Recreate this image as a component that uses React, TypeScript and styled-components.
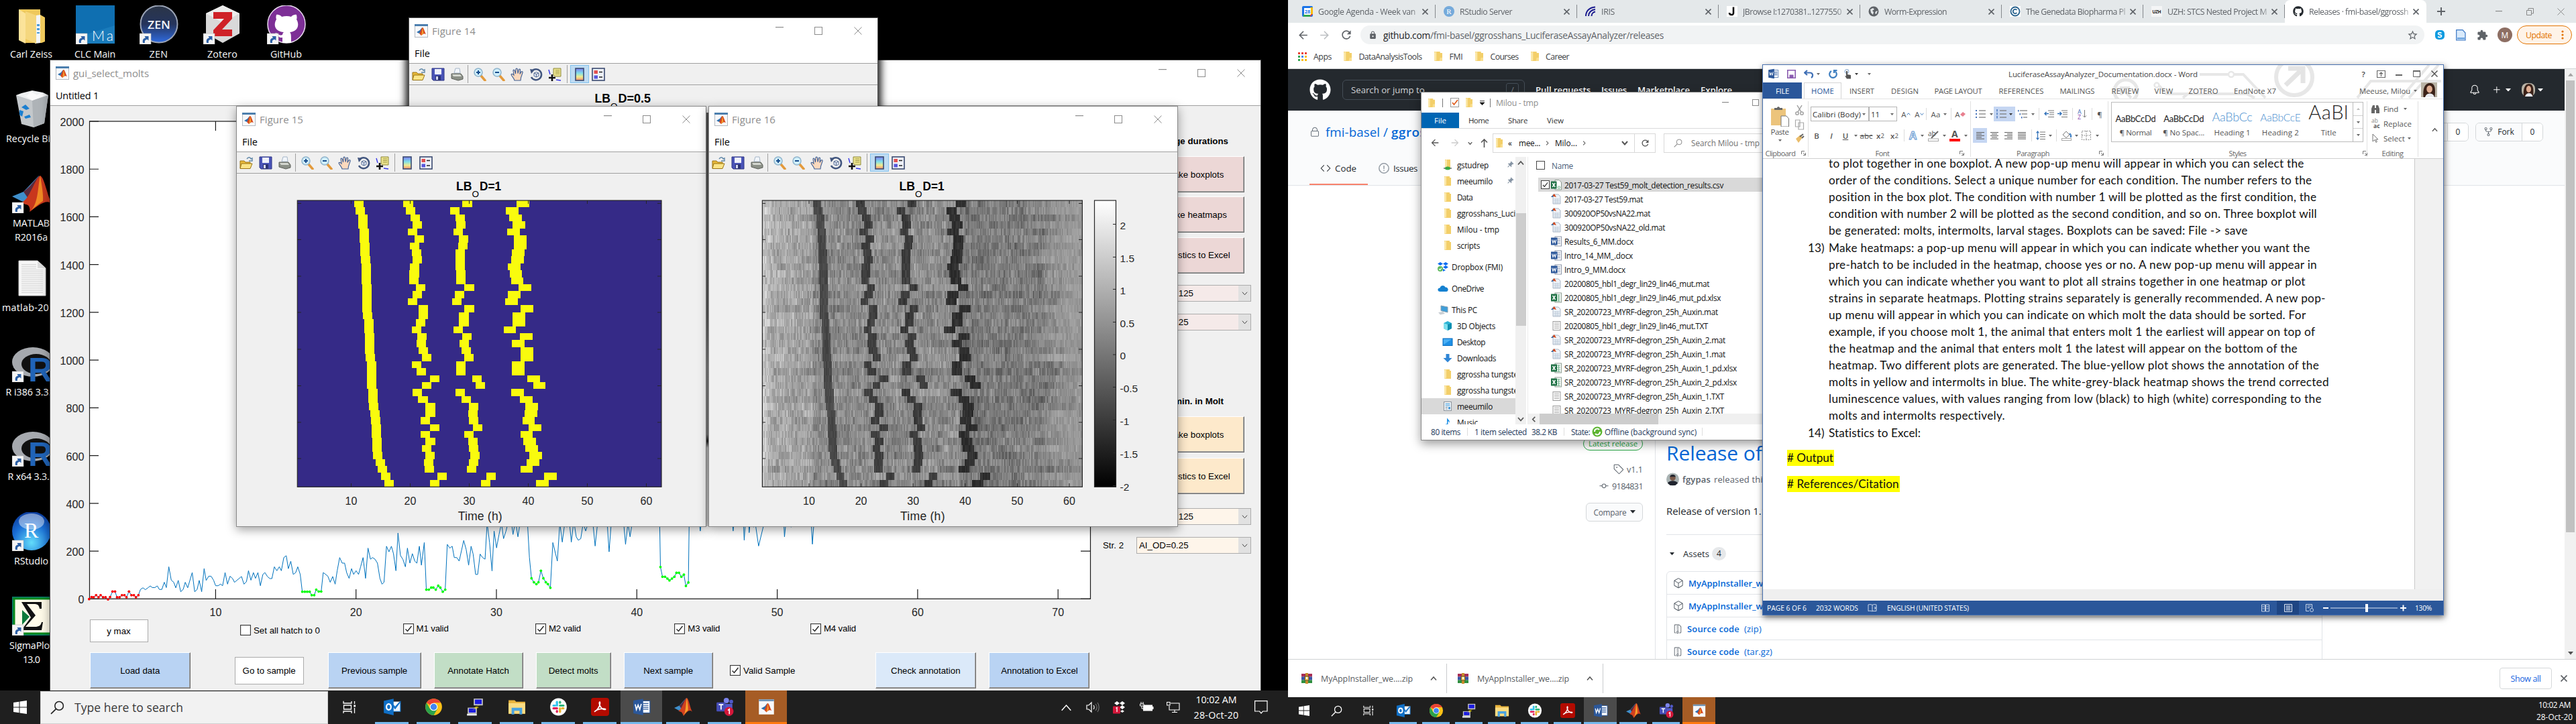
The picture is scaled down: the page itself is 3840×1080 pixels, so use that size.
import React, { useLayoutEffect, useRef } from "react";
import styled, { createGlobalStyle, css } from "styled-components";
import { FaGithub } from "react-icons/fa";
import {
  GoLock, GoCode, GoTag, GoGitCommit, GoPackage, GoFileZip, GoRepoForked, GoBell, GoPlus,
} from "react-icons/go";
import { MdExtension, MdStarBorder, MdArrowBack, MdArrowForward, MdRefresh, MdLock, MdPushPin } from "react-icons/md";

const UI = `"Open Sans", "Noto Sans", sans-serif`;
const ARIAL = `"Liberation Sans", Arial, sans-serif`;
const CALIBRI = `Lato, "Open Sans", sans-serif`;

const Global = createGlobalStyle`
  * { box-sizing: border-box; }
  body { margin: 0; background: #000; font-family: ${UI}; overflow: hidden; }
  svg { display: block; flex-shrink: 0; }
  b { font-weight: 600; }
`;

/* ---------- text helpers ---------- */

const FitSpan = styled.span`
  display: inline-block;
  white-space: pre;
  flex-shrink: 0;
`;

/* Text tracked so that it fills the given width. */
function Fit({ w, children }: { w: number; children: string }) {
  const ref = useRef<HTMLSpanElement>(null);
  useLayoutEffect(() => {
    const el = ref.current;
    if (!el) return;
    el.style.letterSpacing = "0px";
    const natural = el.getBoundingClientRect().width;
    el.style.letterSpacing = `${(w - natural) / children.length}px`;
  }, [w, children]);
  return <FitSpan ref={ref}>{children}</FitSpan>;
}

const Cell = styled.div<{ $w: number; $j?: string }>`
  width: ${(p) => p.$w}px;
  height: 100%;
  flex-shrink: 0;
  display: flex;
  align-items: center;
  justify-content: ${(p) => p.$j || "center"};
  white-space: nowrap;
`;

const Gap = styled.div<{ $w?: number; $h?: number }>`
  width: ${(p) => p.$w || 0}px;
  height: ${(p) => p.$h || 0}px;
  flex-shrink: 0;
`;

/* ---------- shell ---------- */

const Screens = styled.div`
  display: flex;
  width: 3840px;
  height: 1080px;
`;
const Monitor = styled.div`
  width: 1920px;
  height: 1080px;
  display: flex;
  flex-direction: column;
  overflow: hidden;
  background: #000;
`;
const Workspace = styled.div`
  position: relative;
  flex: 1;
  overflow: hidden;
`;
const Win = styled.div<{ $x: number; $y: number; $w: number; $h: number; $shadow?: string; $border?: string }>`
  position: absolute;
  left: ${(p) => p.$x}px;
  top: ${(p) => p.$y}px;
  width: ${(p) => p.$w}px;
  height: ${(p) => p.$h}px;
  display: flex;
  flex-direction: column;
  background: #fff;
  border: 1px solid ${(p) => p.$border || "#8a8a8a"};
  box-shadow: ${(p) => p.$shadow || "0 4px 14px rgba(0,0,0,.38)"};
  overflow: hidden;
`;

/* ---------- shared drawings ---------- */

const FigIcon = ({ s = 20 }: { s?: number }) => (
  <svg width={s} height={s} viewBox="0 0 20 20">
    <rect x="0.5" y="0.5" width="19" height="19" fill="#f7f8fa" stroke="#b4b9c0" />
    <rect x="0" y="0" width="20" height="3" fill="#4c7fae" />
    <path d="M3 12 L8 9 L11 5 L9 12 L7 14 Z" fill="#2f6fae" />
    <path d="M7 14 C9 12 10 5 12 5 C14 6 15 12 17 15 C14 13 12 15 10 17 Z" fill="#d6451d" />
    <path d="M12 5 L13.4 13.5 L10 17 Z" fill="#f2a02c" />
  </svg>
);

const Folder = ({ w = 11, h = 14 }: { w?: number; h?: number }) => (
  <svg width={w} height={h} viewBox="0 0 11 14" preserveAspectRatio="none">
    <path d="M0 0 H8 V2 H11 V14 H0 Z" fill="#f3cf6a" />
    <path d="M0 1 L3 0 V13 L0 14 Z" fill="#fbe7a8" />
    <path d="M8 9 H11 V14 H7 Z" fill="#fadf8f" />
  </svg>
);

const Chevron = ({ s = 10, dir = "down", c = "#555", sw = 1.5 }: { s?: number; dir?: string; c?: string; sw?: number }) => {
  const d: Record<string, string> = {
    down: "M1 3 L5 7.5 L9 3", up: "M1 7.5 L5 3 L9 7.5", right: "M3 1 L7 5 L3 9", left: "M7 1 L3 5 L7 9",
  };
  return (
    <svg width={s} height={s} viewBox="0 0 10 10">
      <path d={d[dir]} fill="none" stroke={c} strokeWidth={sw} />
    </svg>
  );
};
const Caret = ({ c = "#666", s = 5, up }: { c?: string; s?: number; up?: boolean }) => (
  <svg width={s} height={s * 0.6} viewBox="0 0 10 6"><path d={up ? "M0 6 H10 L5 0 Z" : "M0 0 H10 L5 6 Z"} fill={c} /></svg>
);
const Cross = ({ s = 12, c = "#8c8c8c", sw = 1 }: { s?: number; c?: string; sw?: number }) => (
  <svg width={s} height={s} viewBox={`0 0 ${s} ${s}`}>
    <path d={`M0.5 0.5 L${s - 0.5} ${s - 0.5} M${s - 0.5} 0.5 L0.5 ${s - 0.5}`} stroke={c} strokeWidth={sw} />
  </svg>
);
const MinGlyph = ({ w = 12, c = "#8c8c8c" }: { w?: number; c?: string }) => (
  <svg width={w} height="2"><rect width={w} height="1.2" fill={c} /></svg>
);
const MaxGlyph = ({ s = 12, c = "#8c8c8c" }: { s?: number; c?: string }) => (
  <svg width={s} height={s}><rect x=".5" y=".5" width={s - 1} height={s - 1} fill="none" stroke={c} /></svg>
);
const Magnifier = ({ s = 20, c = "#222" }: { s?: number; c?: string }) => (
  <svg width={s} height={s} viewBox="0 0 20 20">
    <circle cx="12.5" cy="7.5" r="6" fill="none" stroke={c} strokeWidth="1.5" />
    <path d="M8 12 L1 19" stroke={c} strokeWidth="1.6" />
  </svg>
);

/* ---------- desktop icons ---------- */

const ShortcutArrow = () => (
  <g transform="translate(0 42)">
    <rect width="17" height="16" fill="#f5f5f5" stroke="#bbb" strokeWidth=".6" />
    <path d="M5 14 C4 9 6 7 9 6.5 L7.5 4 H13.5 V10.5 L11.5 8.7 C8 9.5 7.5 11 8 14 Z" fill="#2c5fa5" />
  </g>
);

const RLogo = () => (
  <>
    <ellipse cx="31" cy="24" rx="31" ry="22" fill="#a6a9ae" />
    <ellipse cx="36" cy="27" rx="22" ry="15" fill="#111" />
    <text x="24" y="53" fontFamily={ARIAL} fontWeight="bold" fontSize="50" fill="#2064b8">R</text>
  </>
);

const deskArt: Record<string, React.ReactNode> = {
  zeiss: (
    <g>
      <path d="M10 6 H42 V14 L49 18 V54 L44 56 H20 Z" fill="#efc95c" />
      <path d="M36 15 L42 14 V56 L34 57 Z" fill="#f4f6f8" />
      <path d="M37 28 h4 v3 h-4z M37 34 h4 v3 h-4z M37 40 h4 v2 h-4z" fill="#4b9bd4" />
      <path d="M10 6 L20 12 V57 L10 52 Z" fill="#fbe39a" />
      <path d="M20 9 L36 15 V57 L20 50 Z" fill="#f5d77e" />
    </g>
  ),
  clc: (
    <g>
      <rect width="58" height="57" fill="#1a7cbc" />
      <path d="M0 0 H58 V30 L0 48 Z" fill="#0f6fb1" />
      <text x="24" y="53" fontFamily={CALIBRI} fontWeight="300" fontSize="21" fill="#fff" textLength="32">Ma</text>
      <ShortcutArrow />
    </g>
  ),
  zen: (
    <g>
      <defs><linearGradient id="zen" x1="0" x2="0" y1="0" y2="1"><stop offset="0" stopColor="#2b3547" /><stop offset=".5" stopColor="#25345c" /><stop offset="1" stopColor="#2f6be0" /></linearGradient></defs>
      <circle cx="29" cy="28" r="27.5" fill="url(#zen)" stroke="#9aa3b5" strokeWidth="2" />
      <text x="12" y="35" fontFamily={UI} fontWeight="600" fontSize="17" fill="#f2f5fa" textLength="34" lengthAdjust="spacingAndGlyphs">ZEN</text>
      <ShortcutArrow />
    </g>
  ),
  zotero: (
    <g>
      <path d="M29 0 L54 12 V42 L29 56 L4 42 V12 Z" fill="#d9d9d9" />
      <path d="M29 0 L54 12 L29 26 L4 12 Z" fill="#ececec" />
      <path d="M15 10 H43 V20 L28 36 H43 V46 H15 V37 L31 20 H15 Z" fill="#cf2127" />
      <ShortcutArrow />
    </g>
  ),
  github: (
    <g>
      <circle cx="29" cy="28" r="28" fill="#7d2f96" />
      <circle cx="29" cy="28" r="28" fill="none" stroke="#e9dcef" strokeWidth="1.5" />
      <path d="M14 14 C18 13 21 16 22 17 C27 15.500 32 15.500 36 17 C37 16 40 13 44 14 C45 18 44.500 20 44 21 C49 29 46 39 34 40 C36 42 36 44 36 56 H23 V48 C17 49 16 44 12 41 C15 40 18 46 23 44 C23 42 24 41 25 40 C12 39 9 29 14 21 C13 18 13.500 16 14 14 Z" fill="#fff" />
      <ShortcutArrow />
    </g>
  ),
  bin: (
    <g>
      <path d="M6 8 L54 8 L48 50 L32 56 L14 51 Z" fill="#c4c8cb" />
      <path d="M6 8 L30 16 L54 8 L46 4 L30 1 L14 5 Z" fill="#eef0f1" />
      <path d="M30 16 L54 8 L48 50 L32 56 Z" fill="#aeb3b7" />
      <path d="M14 5 l8 4 l6 -7 l9 6 l6 -4 l5 5 l-18 7 z" fill="#fafafa" />
      <path d="M14 26 l6 -4 l6 6 l-5 2 z M11 30 l6 2 l-2 8 l-4 -3z M18 40 l8 -3 l2 4 l-8 2z" fill="#1b7fd0" />
    </g>
  ),
  matlab: (
    <g>
      <g transform="translate(0 2)">
        <path d="M0 31 L17 24 C24 17 31 9 40 0 L33 25 L20 40 L14 38 Z" fill="#3f8fcb" />
        <path d="M17 24 C26 18 32 8 41 0 L32 26 L24 34 Z" fill="#5b2a3c" />
        <path d="M14 40 C26 36 34 4 42 0 C49 4 52 30 60 43 C52 34 42 42 26 54 C28 48 24 42 20 43 Z" fill="#c8371d" />
        <path d="M42 0 C44 14 47 28 46 38 C40 42 32 48 27 54 C40 40 38 16 42 0 Z" fill="#f08a24" />
      </g>
      <ShortcutArrow />
    </g>
  ),
  doc: (
    <g>
      <path d="M10 3 H38 L50 14 V55 H10 Z" fill="#f7f7f7" stroke="#cfcfcf" />
      <path d="M38 3 V14 H50 Z" fill="#dcdcdc" />
      {Array.from({ length: 16 }, (_, i) => <rect key={i} x="14" y={8 + i * 2.8} width={i < 3 ? 22 : 32} height="1" fill="#d2d2d2" />)}
    </g>
  ),
  r: <g><g transform="translate(0 4)"><RLogo /></g><ShortcutArrow /></g>,
  rstudio: (
    <g>
      <defs><radialGradient id="rs" cx=".5" cy=".8" r=".8"><stop offset="0" stopColor="#63dcfb" /><stop offset=".6" stopColor="#1a6fd6" /><stop offset="1" stopColor="#0b3a9a" /></radialGradient></defs>
      <circle cx="29" cy="28" r="29" fill="url(#rs)" />
      <ellipse cx="29" cy="14" rx="19" ry="12" fill="#fff" opacity=".45" />
      <text x="18" y="38" fontFamily="Liberation Serif, serif" fontSize="32" fill="#fff">R</text>
      <ShortcutArrow />
    </g>
  ),
  sigma: (
    <g>
      <rect width="62" height="58" fill="#0a7a6d" />
      <rect x="3" y="3" width="60" height="52" fill="#fffbe9" stroke="#0b8a1c" strokeWidth="3" />
      <path d="M15 20 L26 30 L15 42 Z" fill="#0d7a3c" />
      <path d="M14 8 H44 V18 H41 C40 12 38 11 32 11 H22 L35 28 L20 45 H34 C40 45 43 43 44 38 H46 L44 50 H14 L28 31 Z" fill="#111" />
      <ShortcutArrow />
    </g>
  ),
};

const DeskGrid = styled.div`
  position: absolute;
  left: -1px;
  top: 8px;
  display: grid;
  grid-template-columns: repeat(5, 95px);
  grid-auto-rows: 126px;
`;
const DeskItem = styled.div<{ $col: number; $row: number }>`
  grid-column: ${(p) => p.$col};
  grid-row: ${(p) => p.$row};
  display: flex;
  flex-direction: column;
  align-items: center;
  color: #fff;
  font: 14.300px/21px ${UI};
  text-align: center;
  white-space: nowrap;
  & > svg { margin-bottom: 4px; }
`;
const deskItems: [string, number, number, [string, number][]][] = [
  ["zeiss", 1, 1, [["Carl Zeiss", 63]]],
  ["clc", 2, 1, [["CLC Main", 61]]],
  ["zen", 3, 1, [["ZEN", 28]]],
  ["zotero", 4, 1, [["Zotero", 45]]],
  ["github", 5, 1, [["GitHub", 47]]],
  ["bin", 1, 2, [["Recycle Bin", 75]]],
  ["matlab", 1, 3, [["MATLAB", 55], ["R2016a", 49]]],
  ["doc", 1, 4, [["matlab-2016", 87]]],
  ["r", 1, 5, [["R i386 3.3.2", 76]]],
  ["r", 1, 6, [["R x64 3.3.2", 70]]],
  ["rstudio", 1, 7, [["RStudio", 51]]],
  ["sigma", 1, 8, [["SigmaPlot", 65], ["13.0", 25]]],
];

/* ---------- MATLAB figure chrome ---------- */

const FigTitle = styled.div`
  height: 38px;
  flex-shrink: 0;
  display: flex;
  align-items: center;
  padding-left: 8px;
  gap: 6px;
  color: #8e8e8e;
  font-size: 15px;
`;
const FigMenu = styled.div`
  height: 30px;
  flex-shrink: 0;
  padding-left: 8px;
  display: flex;
  align-items: center;
  border-bottom: 1.5px solid #a0a0a0;
  font-size: 14.500px;
  color: #000;
`;
const FigTools = styled.div`
  height: 32px;
  flex-shrink: 0;
  background: #f0f0f0;
  display: flex;
  align-items: center;
  border-bottom: 1.5px solid #a0a0a0;
`;
const Spacer = styled.div`flex: 1;`;
const Captions = styled.div`
  margin-left: auto;
  display: flex;
`;
const CaptionButtons = () => (
  <Captions>
    <Cell $w={58}><MinGlyph /></Cell>
    <Cell $w={58}><MaxGlyph /></Cell>
    <Cell $w={59}><Cross /></Cell>
  </Captions>
);
const ToolToggle = styled.div<{ $on?: boolean }>`
  width: 28px;
  height: 27px;
  display: flex;
  align-items: center;
  justify-content: center;
  ${(p) => p.$on && css`background: #bfdcf3; border: 1px solid #84c3ee;`}
`;
const ToolSep = styled.div`
  width: 1px;
  height: 27px;
  background: #a0a0a0;
`;

const toolArt: Record<string, React.ReactNode> = {
  open: <g><path d="M1 7 H7 L9 9 H16 V18 H1 Z" fill="#e8b93a" stroke="#9a7413" /><path d="M3 11 H19 L16 18.500 H1 Z" fill="#fbe588" stroke="#9a7413" /><path d="M11 4 C13 1 16 1 17 4 L19 3 V7 H14" fill="none" stroke="#5f87a8" strokeWidth="1.400" /></g>,
  save: <g><path d="M1 1 H19 V19 H3 L1 17 Z" fill="#4a54b8" stroke="#2e3685" /><rect x="5" y="2" width="10" height="8" fill="#eef1fb" /><rect x="6" y="12" width="8" height="7" fill="#2b3272" /><rect x="7" y="13" width="3" height="5" fill="#d7dbf2" /></g>,
  print: <g><path d="M6 8 L8 1 H14 L15 8 Z" fill="#f2f6fb" stroke="#a6b6c8" /><path d="M2 9 H16 L19 13 V17 L12 19 L2 16 Z" fill="#8b9087" stroke="#5c605a" /><path d="M3 10 H15 L17 13 H5 Z" fill="#d4d7d0" /></g>,
  zin: <g><path d="M12 12 L18 19" stroke="#e39a3b" strokeWidth="3.500" strokeLinecap="round" /><circle cx="8" cy="7" r="6" fill="#cfeefa" stroke="#8fb4cc" strokeWidth="1.500" /><path d="M8 4 V10 M5 7 H11" stroke="#164c8c" strokeWidth="2" /></g>,
  zout: <g><path d="M12 12 L18 19" stroke="#e39a3b" strokeWidth="3.500" strokeLinecap="round" /><circle cx="8" cy="7" r="6" fill="#cfeefa" stroke="#8fb4cc" strokeWidth="1.500" /><path d="M5 7 H11" stroke="#164c8c" strokeWidth="2" /></g>,
  hand: <path d="M6 19 C5 15 1 12 1 10 C2 8.500 4 10 5 11 L4 4 C4.500 2.500 6 3 6.500 5 L7.500 9 L8 2 C9 .5 10.500 1 10.500 3 L11 8.500 L12.500 2.500 C13.500 1.500 15 2 14.500 4 L14 9.500 L16 6 C17.500 5 18.500 6 18 7.500 L15.500 15 L15 19 Z" fill="#fbd9bd" stroke="#3d5f96" strokeWidth="1.100" />,
  rot: <g><path d="M4 5 A8 8 0 1 1 3 14" fill="none" stroke="#42567f" strokeWidth="2.600" /><path d="M1 2 L8 3 L3 9 Z" fill="#42567f" /><path d="M7 8 L10.500 6.500 L14 8 V12.500 L10.500 14 L7 12.500 Z M7 8 L10.500 9.500 L14 8 M10.500 9.500 V14" fill="#dfe6f2" stroke="#5a7098" /></g>,
  cursor: <g><path d="M8 1 H19 V13 H10 L8 11 Z" fill="#e9e18d" stroke="#8f8a3a" /><path d="M11 4 H17 M11 6.500 H17 M11 9 H17" stroke="#a39c4b" /><path d="M1 3 L3 10 M12 18 L19 19" stroke="#3535e6" strokeWidth="1.400" /><path d="M6 10 V20 M1 15 H11" stroke="#111" strokeWidth="2.600" /></g>,
  bar: <g><defs><linearGradient id="cb" x1="0" x2="0" y1="0" y2="1"><stop offset="0" stopColor="#7d7cf0" /><stop offset=".4" stopColor="#7fe0ea" /><stop offset=".7" stopColor="#f1ec8d" /><stop offset="1" stopColor="#f28a73" /></linearGradient></defs><rect x="4" y="1" width="12" height="18" fill="url(#cb)" stroke="#3a4a70" strokeWidth="1.600" /></g>,
  legend: <g><rect x="1" y="1" width="18" height="18" fill="#eef1f8" stroke="#3a4a70" strokeWidth="1.600" /><rect x="3.500" y="4" width="5.500" height="5" fill="#e25050" /><rect x="3.500" y="11.500" width="5.500" height="5" fill="#5656dc" /><path d="M11 6.500 H16 M11 14 H16" stroke="#222" strokeWidth="1.400" /></g>,
};
const Tool = ({ k }: { k: string }) => <svg width="20" height="20" viewBox="0 0 20 20">{toolArt[k]}</svg>;

function FigureFrame({ n, barOn }: { n: number; barOn?: boolean }) {
  return (
    <>
      <FigTitle><FigIcon /><Fit w={65}>{`Figure ${n}`}</Fit><CaptionButtons /></FigTitle>
      <FigMenu><Fit w={23}>File</Fit></FigMenu>
      <FigTools>
        <Cell $w={28}><Tool k="open" /></Cell>
        <Cell $w={29}><Tool k="save" /></Cell>
        <Cell $w={28}><Tool k="print" /></Cell>
        <Gap $w={2} />
        <ToolSep />
        <Gap $w={3} />
        <Cell $w={28}><Tool k="zin" /></Cell>
        <Cell $w={28}><Tool k="zout" /></Cell>
        <Cell $w={28}><Tool k="hand" /></Cell>
        <Cell $w={28}><Tool k="rot" /></Cell>
        <Cell $w={28}><Tool k="cursor" /></Cell>
        <Gap $w={4} />
        <ToolSep />
        <Gap $w={4} />
        <ToolToggle $on={barOn}><Tool k="bar" /></ToolToggle>
        <ToolToggle><Tool k="legend" /></ToolToggle>
      </FigTools>
    </>
  );
}
const FigBody = styled.div`
  flex: 1;
  background: #f0f0f0;
  overflow: hidden;
`;

const PlotTitle = ({ x, y, tail, w }: { x: number; y: number; tail: string; w: number }) => (
  <g fontFamily={ARIAL} fill="#000">
    <text x={x} y={y} fontWeight="bold" fontSize="17.600" textLength="23.500" lengthAdjust="spacingAndGlyphs">LB</text>
    <text x={x + 23.5} y={y + 9.5} fontSize="13.500">O</text>
    <text x={x + 35} y={y} fontWeight="bold" fontSize="17.600" textLength={w} lengthAdjust="spacingAndGlyphs">{tail}</text>
  </g>
);

/* ---------- molt data ---------- */

const ROWS = 41;
const PLOT_W = 542.7;
const PLOT_H = 427.3;
const molts: { width: number; start: number[] }[] = [
  { width: 14, start: [85, 87, 90.6, 90.6, 92.6, 92.6, 93.8, 94, 94.3, 95.9, 95.9, 95.9, 96.7, 96.7, 96.7, 96.7, 97.5, 99.6, 99.6, 100.8, 101, 101, 102, 103.4, 103.4, 103.4, 103.4, 105.9, 105.9, 106.5, 109, 109.6, 110.8, 110.8, 111.4, 112, 112.6, 116.3, 120, 124.3, 129.8] },
  { width: 14.3, start: [158, 161.6, 168.5, 171.8, 164.6, 174.7, 167.7, 170.6, 171.8, 167.7, 167.2, 166.5, 176.7, 171.8, 164.9, 180.8, 180.8, 176.7, 170.8, 178.5, 177.7, 180.8, 185.7, 170.8, 177.5, 197.7, 185.5, 171.4, 180, 191, 191, 183.6, 197.7, 183.6, 191, 185.5, 190.4, 188.5, 189.3, 208.8, 197.7] },
  { width: 14.3, start: [246, 227.4, 235.8, 236.8, 232.3, 240.8, 239.3, 235.3, 235.3, 235.3, 236.3, 236.3, 249.1, 234.3, 230.4, 249.1, 241.2, 241.2, 232.3, 245.6, 241.7, 244.6, 248.6, 236.9, 236.9, 260.8, 265.7, 235.7, 244.9, 255.9, 254.7, 255.9, 261.4, 248.6, 254.7, 255.9, 257.7, 255.9, 252.8, 281.6, 273.7] },
  { width: 18.6, start: [327, 310.8, 315.7, 320.6, 312.9, 322.6, 322.6, 320.1, 319.1, 313.6, 316.2, 318.2, 330, 313.6, 309.8, 333, 320.8, 320.8, 307.4, 331.9, 319.7, 332.7, 333, 319.6, 319.6, 342.8, 351.4, 319, 331.8, 339.8, 338.6, 335.5, 344.7, 332.4, 336.7, 339.8, 345.9, 341.6, 332.4, 367.9, 355.7] },
];
const rowH = PLOT_H / ROWS;
const rowY = (r: number) => Math.round(r * rowH);
const moltPath = molts
  .map((m) => m.start.map((s, r) => `M${s} ${rowY(r)}h${m.width}v${rowY(r + 1) - rowY(r)}h${-m.width}z`).join(""))
  .join("");

function random(seed: number) {
  let a = seed;
  return () => {
    a = (a * 1664525 + 1013904223) >>> 0;
    return a / 4294967296;
  };
}

/* One path per grey level, built from a row-wise noisy signal. */
const heat = (() => {
  const rnd = random(77);
  const levels: Record<number, string> = {};
  const cols = 372;
  const cw = PLOT_W / cols;
  for (let r = 0; r < ROWS; r++) {
    const rowTone = (rnd() - 0.5) * 12;
    const calmFrom = 425 + rnd() * 75;
    let drift = 0;
    for (let c = 0; c < cols; c++) {
      const x = c * cw;
      drift = drift * 0.8 + (rnd() - 0.5) * 16;
      let g = 139 + rowTone + drift + (rnd() - 0.5) * 46;
      if (x < 16) g += 62 - x * 1.8;
      else if (x < 85) g += 32 - (x - 16) * 0.2;
      if (x > 335 && x <= calmFrom) g -= 16;
      if (x > calmFrom) {
        const t = Math.min(1, (x - calmFrom) / 60);
        g = 124 + t * 30 + (g - 139) * (1 - 0.5 * t);
      }
      molts.forEach((m, i) => {
        const s = m.start[r];
        if (x >= s && x < s + m.width) g = [72, 62, 60, 46][i] + (rnd() - 0.5) * 20;
      });
      const k = Math.max(24, Math.min(232, Math.round(g / 8) * 8));
      levels[k] = (levels[k] || "") + `M${x.toFixed(2)} ${rowY(r)}h${(cw + 0.1).toFixed(2)}v${rowY(r + 1) - rowY(r)}h${-(cw + 0.1).toFixed(2)}z`;
    }
  }
  return Object.entries(levels);
})();

const rowTicks = [303.4, 357.4, 412, 466, 521, 575.5, 630, 684];

function MoltFigure() {
  return (
    <svg width="700" height="526" viewBox="353 259 700 526">
      <PlotTitle x={680} y={284} tail="D=1" w={32} />
      <rect x="443.300" y="299" width={PLOT_W} height={PLOT_H} fill="#352a87" />
      <path d={moltPath} transform="translate(443.300 299)" fill="#f9fb0e" shapeRendering="crispEdges" />
      <rect x="443.300" y="299" width={PLOT_W} height={PLOT_H} fill="none" stroke="#262626" strokeWidth="1.200" />
      {rowTicks.map((y) => <path key={y} d={`M443 ${y}h6M986 ${y}h-6`} stroke="#262626" />)}
      {[10, 20, 30, 40, 50, 60].map((t, i) => (
        <g key={t}>
          <path d={`M${523.5 + i * 88} 726v-5M${523.5 + i * 88} 299v5`} stroke="#262626" />
          <text x={523.5 + i * 88} y="752.500" textAnchor="middle" fontFamily={ARIAL} fontSize="16" fill="#262626">{t}</text>
        </g>
      ))}
      <text x="682.700" y="776" fontFamily={ARIAL} fontSize="17.600" fill="#262626" textLength="66">Time (h)</text>
    </svg>
  );
}

function HeatFigure() {
  const bar = [["2", 336], ["1.5", 385], ["1", 433], ["0.5", 482], ["0", 530.5], ["-0.5", 579], ["-1", 628], ["-1.5", 677], ["-2", 726]] as [string, number][];
  return (
    <svg width="699" height="526" viewBox="1057 259 699 526">
      <defs><linearGradient id="grey" x1="0" x2="0" y1="0" y2="1"><stop offset="0" stopColor="#fff" /><stop offset="1" stopColor="#000" /></linearGradient></defs>
      <PlotTitle x={1340.5} y={284} tail="D=1" w={32} />
      <g transform={`translate(1136.400 299) scale(${477 / PLOT_W} 1)`} shapeRendering="crispEdges">
        {heat.map(([k, d]) => <path key={k} d={d} fill={`rgb(${k},${k},${k})`} />)}
      </g>
      <rect x="1136.400" y="299" width="477" height={PLOT_H} fill="none" stroke="#262626" strokeWidth="1.200" />
      {rowTicks.map((y) => <path key={y} d={`M1136 ${y}h5M1613 ${y}h-5`} stroke="#262626" />)}
      {[10, 20, 30, 40, 50, 60].map((t, i) => (
        <g key={t}>
          <path d={`M${1206 + i * 77.6} 726v-5M${1206 + i * 77.6} 299v5`} stroke="#262626" />
          <text x={1206 + i * 77.6} y="752.500" textAnchor="middle" fontFamily={ARIAL} fontSize="16" fill="#262626">{t}</text>
        </g>
      ))}
      <text x="1342" y="776" fontFamily={ARIAL} fontSize="17.600" fill="#262626" textLength="66.500">Time (h)</text>
      <rect x="1631.500" y="299" width="32" height={PLOT_H} fill="url(#grey)" stroke="#262626" strokeWidth="1.200" />
      {bar.map(([t, y]) => (
        <g key={t}>
          <path d={`M1663 ${y - 1.5}h-4`} stroke="#262626" />
          <text x="1669.500" y={y + 5.500} fontFamily={ARIAL} fontSize="15.500" fill="#262626">{t}</text>
        </g>
      ))}
    </svg>
  );
}

/* ---------- sample trace ---------- */

/* Trace coordinates are in a 1.633 x 2.904 grid anchored at the lower left of the axes. */
const redPts = "217,1030 223,1021 228,1022 234,1013 240,1022 245,1013 251,1022 257,1022 263,1031 268,1021 274,997 280,997 285,1022 291,1022 297,1013 303,1013 308,1022 314,997 320,1013 326,1013 331,1022 337,1013";
const greenPts = [
  "736,998 742,998 748,998 754,998 759,1013 765,1013 770,989 776,997 782,997",
  "1038,989 1044,989 1050,980 1055,980 1061,989 1067,972 1072,980 1078,998 1084,989",
  "1294,940 1300,957 1306,965 1311,957 1317,907 1323,940 1329,957 1334,965 1340,981",
  "1608,891 1613,933 1619,933 1625,941 1630,949 1636,941 1642,933 1647,916 1653,916 1659,933 1665,924 1670,973 1676,958",
];
const tracePts =
  redPts +
  " 342,988 348,981 354,989 360,981 366,973 371,980 377,980 383,973 388,988 394,988 400,957 405,980 411,890 417,948 423,957 428,981 434,949 440,998 446,988 451,957 457,981 468,915 474,998 480,988 485,949 491,998 497,898 502,949 508,931 514,931 520,948 525,972 531,972 537,965 542,972 548,915 554,965 560,931 566,940 571,957 588,932 594,965 600,955 605,907 611,948 617,915 622,940 628,915 634,972 640,923 645,915 651,932 657,941 662,941 668,890 674,907 680,890 685,907 691,850 697,842 702,898 708,866 714,923 720,915 725,890 731,923 " +
  greenPts[0] +
  " 787,915 798,930 804,957 810,932 816,965 821,907 827,850 833,874 839,874 844,915 850,940 856,898 861,923 867,907 873,923 878,890 884,850 890,940 896,809 902,857 907,850 913,857 919,874 925,940 930,965 935,957 941,801 947,825 953,801 958,833 964,907 969,744 975,841 981,858 987,890 992,809 998,874 1004,833 1010,866 1015,874 1021,801 1026,883 1033,785 " +
  greenPts[1] +
  " 1089,793 1095,809 1101,801 1106,850 1112,850 1118,865 1129,776 1135,815 1141,883 1147,801 1152,835 1158,923 1163,923 1169,835 1175,850 1181,857 1186,700 1192,785 1198,908 1203,735 1209,808 1215,750 1221,700 1226,768 1232,735 1238,690 1244,680 1249,750 1255,690 1261,760 1267,690 1278,680 1284,690 1289,850 " +
  greenPts[2] +
  " 1346,785 1357,865 1363,700 1369,783 1375,700 1380,718 1386,690 1391,783 1397,690 1403,760 1408,775 1414,768 1420,700 1426,735 1432,700 1443,690 1449,800 1455,700 1461,680 1478,690 1483,825 1489,680 1518,690 1523,793 1529,700 1534,760 1540,690 1606,690 " +
  greenPts[3] +
  " 1678,690 1702,690 1705,735 1708,690 1783,690 1785,735 1787,690 1810,700 1812,775 1815,690 1823,690 1824,742 1827,690 1835,718 1838,690 1847,800 1859,712 1866,680 1908,690 1910,760 1914,690 1926,718 1930,690 1975,690 1978,792 1982,690";

const GX = 1 / 1.6333;
const GY = 1 / 2.9037;
const dots = (pts: string) =>
  pts.split(" ").map((p, i) => {
    const [x, y] = p.split(",").map(Number);
    return <circle key={i} cx={x * GX} cy={540 + y * GY} r="1.900" />;
  });

function TracePlot() {
  const yTicks = [2000, 1800, 1600, 1400, 1200, 1000, 800, 600, 400, 200, 0];
  const xTicks = [10, 20, 30, 40, 50, 60, 70];
  return (
    <svg width="1566" height="766" viewBox="75 159 1566 766">
      <rect x="133.500" y="182" width="1492" height="712.300" fill="#fff" stroke="#1a1a1a" strokeWidth="1.200" />
      {yTicks.map((t, i) => (
        <g key={t}>
          <path d={`M133 ${182 + i * 71.23}h14M1625 ${182 + i * 71.23}h-14`} stroke="#1a1a1a" strokeWidth="1.200" />
          <text x="125.500" y={189 + i * 71.23} textAnchor="end" fontFamily={ARIAL} fontSize="16.200" fill="#262626">{t}</text>
        </g>
      ))}
      {xTicks.map((t, i) => (
        <g key={t}>
          <path d={`M${321.4 + i * 209.3} 894v-14M${321.4 + i * 209.3} 182v14`} stroke="#1a1a1a" strokeWidth="1.200" />
          <text x={321.4 + i * 209.3} y="920" textAnchor="middle" fontFamily={ARIAL} fontSize="16" fill="#262626">{t}</text>
        </g>
      ))}
      <polyline points={tracePts} transform={`translate(0 540) scale(${GX} ${GY})`} fill="none" stroke="#0072bd" strokeWidth="1" vectorEffect="non-scaling-stroke" />
      <g fill="#f00">{dots(redPts)}</g>
      <g fill="#0f0">{greenPts.map((g, i) => <g key={i}>{dots(g)}</g>)}</g>
    </svg>
  );
}

/* ---------- gui_select_molts ---------- */

const GuiBody = styled.div`
  flex: 1;
  display: flex;
  background: #f0f0f0;
  font: 13.300px ${ARIAL};
  color: #000;
`;
const GuiMain = styled.div`
  width: 1566px;
  display: flex;
  flex-direction: column;
`;
const CheckRow = styled.div`
  height: 49px;
  display: flex;
  align-items: flex-start;
`;
const ButtonRow = styled.div`
  height: 54px;
  display: flex;
  align-items: center;
`;
const PushButton = styled.div<{ $w: number; $bg: string; $ml?: number }>`
  width: ${(p) => p.$w}px;
  height: 54px;
  margin-left: ${(p) => p.$ml || 0}px;
  flex-shrink: 0;
  display: flex;
  align-items: center;
  justify-content: center;
  background: ${(p) => p.$bg};
  border: 1px solid;
  border-color: #fff #6d6d6d #6d6d6d #fff;
  box-shadow: inset -1px -1px 0 #a5a5a5;
`;
const EditBox = styled.div<{ $w: number; $h: number; $ml: number }>`
  width: ${(p) => p.$w}px;
  height: ${(p) => p.$h}px;
  margin-left: ${(p) => p.$ml}px;
  flex-shrink: 0;
  display: flex;
  align-items: center;
  justify-content: center;
  background: #fff;
  border: 1px solid #ababab;
`;
const CheckLabel = styled.div<{ $w: number; $mt?: number; $ml?: number }>`
  width: ${(p) => p.$w}px;
  margin-top: ${(p) => p.$mt || 0}px;
  margin-left: ${(p) => p.$ml || 0}px;
  flex-shrink: 0;
  display: flex;
  align-items: center;
  gap: 4px;
  white-space: nowrap;
`;
const Check = ({ on, s = 16, w = 16 }: { on?: boolean; s?: number; w?: number }) => (
  <svg width={w} height={s} viewBox="0 0 16 16" preserveAspectRatio="none">
    <rect x=".6" y=".6" width="14.800" height="14.800" fill="#fff" stroke="#333" strokeWidth="1.100" />
    {on && <path d="M3.500 8.500 L6.500 11.500 L12.500 4" fill="none" stroke="#222" strokeWidth="1.400" />}
  </svg>
);
const GuiSide = styled.div`
  flex: 1;
  display: flex;
  flex-direction: column;
  align-items: flex-end;
`;
const SideTitle = styled.div<{ $mt: number; $mr: number }>`
  height: 20px;
  line-height: 20px;
  margin: ${(p) => p.$mt}px ${(p) => p.$mr}px 12px 0;
  font-weight: bold;
  white-space: nowrap;
`;
const SideButton = styled(PushButton)<{ $mb: number }>`
  margin: 0 24px ${(p) => p.$mb}px 0;
`;
const DropRow = styled.div<{ $mb: number }>`
  display: flex;
  align-items: center;
  height: 24.500px;
  margin: 0 14px ${(p) => p.$mb}px 0;
`;
const Drop = styled.div<{ $bg: string }>`
  width: 171px;
  height: 24.500px;
  display: flex;
  align-items: center;
  justify-content: space-between;
  padding-left: 3px;
  background: ${(p) => p.$bg};
  border: 1px solid #adadad;
`;
const DropArrow = styled.div`
  width: 18px;
  height: 100%;
  display: flex;
  align-items: center;
  justify-content: center;
  background: #e1e1e1;
`;
const DropField = ({ label, text, bg, mb }: { label: string; text: string; bg: string; mb: number }) => (
  <DropRow $mb={mb}>
    <Cell $w={50} $j="flex-start">{label}</Cell>
    <Drop $bg={bg}>{text}<DropArrow><Chevron s={9} c="#444" sw={1.1} /></DropArrow></Drop>
  </DropRow>
);

const BLUE = "#b9d3f3";
const GREEN = "#c2dec6";
const ROSE = "#ecd7d6";
const SAND = "#fde9cb";

function MoltsWindow() {
  return (
    <Win $x={74} $y={89} $w={1806} $h={960} $border="#4a4a4a">
      <FigTitle><FigIcon /><Fit w={113}>gui_select_molts</Fit><CaptionButtons /></FigTitle>
      <FigMenu><Fit w={64}>Untitled 1</Fit></FigMenu>
      <GuiBody>
        <GuiMain>
          <TracePlot />
          <CheckRow>
            <EditBox $w={87} $h={34} $ml={58.500}>y max</EditBox>
            <CheckLabel $ml={137.500} $mt={8} $w={242.600}><Check /><Fit w={99}>Set all hatch to 0</Fit></CheckLabel>
            <CheckLabel $mt={5.500} $w={197.400}><Check on /><Fit w={48}>M1 valid</Fit></CheckLabel>
            <CheckLabel $mt={5.500} $w={207.300}><Check on /><Fit w={48}>M2 valid</Fit></CheckLabel>
            <CheckLabel $mt={5.500} $w={202.700}><Check on /><Fit w={48}>M3 valid</Fit></CheckLabel>
            <CheckLabel $mt={5.500} $w={100}><Check on /><Fit w={48}>M4 valid</Fit></CheckLabel>
          </CheckRow>
          <ButtonRow>
            <PushButton $ml={58.500} $w={150.500} $bg={BLUE}>Load data</PushButton>
            <EditBox $ml={65.600} $w={103} $h={41}>Go to sample</EditBox>
            <PushButton $ml={36} $w={139} $bg={BLUE}>Previous sample</PushButton>
            <PushButton $ml={19} $w={133} $bg={GREEN}>Annotate Hatch</PushButton>
            <PushButton $ml={19} $w={112} $bg={GREEN}>Detect molts</PushButton>
            <PushButton $ml={19} $w={133} $bg={BLUE}>Next sample</PushButton>
            <CheckLabel $ml={25.500} $w={216.700}><Check on />Valid Sample</CheckLabel>
            <PushButton $w={150} $bg="#dbe9f9">Check annotation</PushButton>
            <PushButton $ml={19.700} $w={150} $bg={BLUE}>Annotation to Excel</PushButton>
          </ButtonRow>
        </GuiMain>
        <GuiSide>
          <SideTitle $mt={43} $mr={48}>Larval stage durations</SideTitle>
          <SideButton $w={147} $bg={ROSE} $mb={6.300}>Make boxplots</SideButton>
          <SideButton $w={147} $bg={ROSE} $mb={6.300}>Make heatmaps</SideButton>
          <SideButton $w={147} $bg={ROSE} $mb={17.500}>Statistics to Excel</SideButton>
          <DropField label="Str. 1" text="AI_OD=0.125" bg="#f5eae9" mb={18.500} />
          <DropField label="Str. 2" text="AI_OD=0.25" bg="#f5eae9" mb={0} />
          <SideTitle $mt={96.500} $mr={55}>Lum. min. in Molt</SideTitle>
          <SideButton $w={147} $bg={SAND} $mb={8}>Make boxplots</SideButton>
          <SideButton $w={147} $bg={SAND} $mb={21}>Statistics to Excel</SideButton>
          <DropField label="Str. 1" text="AI_OD=0.125" bg="#fef5ea" mb={18.500} />
          <DropField label="Str. 2" text="AI_OD=0.25" bg="#fef5ea" mb={0} />
        </GuiSide>
      </GuiBody>
    </Win>
  );
}

const WindowSeam = styled.div`
  position: absolute;
  left: 1053px;
  top: 168px;
  width: 3px;
  height: 617px;
  background: linear-gradient(#5c5c5c 0, #666 300px, #909090 380px, #8a8a8a 480px, #222 490px, #ccc 500px, #ddd 617px);
`;

/* ---------- taskbar ---------- */

const Bar = styled.div<{ $h: number }>`
  height: ${(p) => p.$h}px;
  flex-shrink: 0;
  display: flex;
  align-items: center;
  background: #1f1f1f;
  color: #fff;
  position: relative;
`;
const SearchBox = styled.div`
  width: 429px;
  height: 49px;
  display: flex;
  align-items: center;
  gap: 15px;
  padding-left: 14px;
  background: #f2f2f2;
  border: 1px solid #cfcfcf;
  color: #3a3a3a;
  font-size: 17.500px;
`;
const AppSlot = styled.div<{ $w: number; $bg?: string; $line?: string }>`
  width: ${(p) => p.$w}px;
  height: 100%;
  flex-shrink: 0;
  display: flex;
  flex-direction: column;
  align-items: center;
  background: ${(p) => p.$bg || "transparent"};
  &::after {
    content: "";
    width: ${(p) => (p.$bg ? "100%" : "82%")};
    height: 3px;
    background: ${(p) => p.$line || "#76b9ed"};
  }
`;
const AppArt = styled.div`
  flex: 1;
  padding-top: 2px;
  display: flex;
  align-items: center;
`;
const Clock = styled.div<{ $s: number; $lh: number }>`
  display: flex;
  flex-direction: column;
  align-items: center;
  font-size: ${(p) => p.$s}px;
  line-height: ${(p) => p.$lh}px;
`;

const appArt: Record<string, React.ReactNode> = {
  outlook: <g><rect x="9" y="5" width="14" height="13" fill="#fff" /><path d="M9 5 L16 12 L23 5 V18 H9 Z" fill="#e9f2fb" stroke="#0f6fc6" /><path d="M12 9 L16 14 L22 6" stroke="#0f6fc6" strokeWidth="1.600" fill="none" /><path d="M1 4 L14 1 V23 L1 20 Z" fill="#0f6fc6" /><ellipse cx="7.500" cy="12" rx="3" ry="3.800" fill="none" stroke="#fff" strokeWidth="2" /></g>,
  chrome: <g><circle cx="12" cy="12" r="11" fill="#fbc116" /><path d="M12 12 L2.500 6.500 A11 11 0 0 1 21.500 6.500 H12 Z" fill="#ea4335" /><path d="M2.500 6.500 A11 11 0 0 0 12 23 L17 14.500 L12 12 L7 14.500 Z" fill="#2ba24c" /><circle cx="12" cy="12" r="5.200" fill="#fff" /><circle cx="12" cy="12" r="4.200" fill="#4285f4" /></g>,
  putty: <g><rect x="10" y="1" width="12" height="9" fill="#c7c7c7" /><rect x="11.500" y="2.300" width="9" height="6" fill="#1a1ae0" /><rect x="2" y="13" width="12" height="8" fill="#c7c7c7" /><rect x="3.500" y="14" width="9" height="5.500" fill="#1a1ae0" /><rect x="1" y="21" width="13" height="2.500" fill="#eee" /><path d="M19 9 L10 13 H14 L7 17 L17 12.500 H13 Z" fill="#ffe600" /></g>,
  explorer: <g><path d="M1 3 H9 L11 5 H23 V21 H1 Z" fill="#e8b33c" /><rect x="1" y="7" width="22" height="14" fill="#fbdc82" /><path d="M5 13 H19 V22 H15.500 V17 H8.500 V22 H5 Z" fill="#4aa3e0" /></g>,
  slack: <g><ellipse cx="12" cy="12" rx="11" ry="11.500" fill="#fff" /><rect x="8.500" y="4" width="3" height="7.500" rx="1.500" fill="#36c5f0" /><rect x="4" y="8.800" width="5" height="2.800" rx="1.400" fill="#36c5f0" /><rect x="12.500" y="8.800" width="7.500" height="2.800" rx="1.400" fill="#2eb67d" /><rect x="12.500" y="4" width="3" height="4" rx="1.500" fill="#2eb67d" /><rect x="12.500" y="12.500" width="3" height="7.500" rx="1.500" fill="#ecb22e" /><rect x="15.500" y="12.500" width="4.500" height="2.800" rx="1.400" fill="#ecb22e" /><rect x="4" y="12.500" width="7.500" height="2.800" rx="1.400" fill="#e01e5a" /><rect x="8.500" y="16" width="3" height="4" rx="1.500" fill="#e01e5a" /></g>,
  acrobat: <g><rect x="0" y="0" width="24" height="24" rx="3.500" fill="#b30b00" /><path d="M5 18 C8 17 12 11 12 7 C12 4.500 10.500 5 11 8 C12 13 16 16 19 15.500 C21 14 13 13.500 8 16 C6 17 4.500 18.500 5 18 Z" fill="none" stroke="#fff" strokeWidth="1.500" /></g>,
  word: <g><rect x="11" y="4" width="12" height="16" fill="#fff" stroke="#2b579a" /><path d="M14 7.500 H21 M14 10 H21 M14 12.500 H21 M14 15 H21" stroke="#2b579a" strokeWidth="1.100" /><path d="M1 3.500 L14 1 V23 L1 20.500 Z" fill="#2b579a" /><path d="M3.500 8.500 L5 15.500 L7.300 9.500 L9.500 15.500 L11.500 8" fill="none" stroke="#fff" strokeWidth="1.500" /></g>,
  matlab: <g transform="scale(.4 .43)"><path d="M0 31 L17 24 C24 17 31 9 40 0 L33 25 L20 40 L14 38 Z" fill="#3f8fcb" /><path d="M17 24 C26 18 32 8 41 0 L32 26 L24 34 Z" fill="#5b2a3c" /><path d="M14 40 C26 36 34 4 42 0 C49 4 52 30 60 43 C52 34 42 42 31 56 C28 48 24 42 20 43 Z" fill="#d1401f" /><path d="M42 0 C44 14 47 28 46 38 C40 42 36 48 31 55 C40 40 38 16 42 0 Z" fill="#f6a12c" /></g>,
  teams: <g><circle cx="14" cy="3.500" r="3.500" fill="#7b83eb" /><circle cx="20.500" cy="5" r="2.500" fill="#5059c9" /><path d="M9 8 H22 V14 C22 20 17 22 14 21 Z" fill="#5059c9" /><rect x="1" y="6" width="12" height="12" rx="1" fill="#464eb8" /><path d="M4 9 H10 M7 9 V15.500" stroke="#fff" strokeWidth="1.600" /><circle cx="17.500" cy="18" r="6" fill="#d4173a" /><path d="M16 16.500 L18 15 V21.500" stroke="#fff" strokeWidth="1.400" fill="none" /></g>,
  figure: <g><rect x="2" y="2" width="20" height="20" fill="#f7f8fa" /><rect x="2" y="2" width="20" height="2.500" fill="#6f93b5" /><path d="M5 14 L10 11 L13 7 L11 14 L9 16 Z" fill="#2f6fae" /><path d="M9 16 C11 14 12 7 14 7 C16 8 17 14 19 17 C16 15 14 17 12 19 Z" fill="#d6451d" /><path d="M14 7 L15 15 L12 19 Z" fill="#f2a02c" /></g>,
};
const apps = ["outlook", "chrome", "putty", "explorer", "slack", "acrobat", "word", "matlab", "teams", "figure"];
const AppStrip = ({ slot, size }: { slot: number; size: number }) => (
  <>
    {apps.map((a) => (
      <AppSlot key={a} $w={slot} $bg={a === "word" ? "#4b4b4b" : a === "figure" ? "#a65c25" : undefined} $line={a === "figure" ? "#ff7a0f" : undefined}>
        <AppArt><svg width={size} height={size} viewBox="0 0 24 24">{appArt[a]}</svg></AppArt>
      </AppSlot>
    ))}
  </>
);
const WinLogo = ({ s }: { s: number }) => (
  <svg width={s} height={s} viewBox="0 0 20 20"><path d="M0 3 L8.500 1.800 V9.500 H0 Z M9.500 1.600 L20 0 V9.500 H9.500 Z M0 10.500 H8.500 V18.200 L0 17 Z M9.500 10.500 H20 V20 L9.500 18.400 Z" fill="#fff" /></svg>
);
const TaskView = ({ s }: { s: number }) => (
  <svg width={s} height={s} viewBox="0 0 20 20"><path d="M1 2 V.8 M1 1 V4 H13 V1 M1.500 7 H12.500 V13 H1.500 Z M1 19 V16 H13 V19 M17.500 1 V5 M17.500 11 V19" fill="none" stroke="#fff" strokeWidth="1.300" /><rect x="16.300" y="6.500" width="2.800" height="3" fill="#fff" /></svg>
);

function TaskbarMain() {
  return (
    <Bar $h={50}>
      <Cell $w={60}><WinLogo s={20} /></Cell>
      <SearchBox><Magnifier s={21} /><Fit w={162}>Type here to search</Fit></SearchBox>
      <Cell $w={64}><TaskView s={20} /></Cell>
      <AppStrip slot={62} size={27} />
      <Gap $w={406} />
      <Cell $w={20}><Chevron s={17} dir="up" c="#fff" sw={0.9} /></Cell>
      <Cell $w={60}><svg width="20" height="18" viewBox="0 0 20 18"><path d="M1 6 H4 L8 2 V16 L4 12 H1 Z" fill="none" stroke="#fff" strokeWidth="1.200" /><path d="M11 6 C12.500 8 12.500 10 11 12" fill="none" stroke="#fff" strokeWidth="1.200" /><path d="M14 4 C16.500 7 16.500 11 14 14 M17 2 C20 6 20 12 17 16" fill="none" stroke="#777" strokeWidth="1.100" /></svg></Cell>
      <Cell $w={20}><svg width="20" height="20" viewBox="0 0 20 20"><path d="M6 1 l4 3 l-4 3 l-4 -3z M14 1 l4 3 l-4 3 l-4 -3z M14 7 l4 3 l-4 3 l-4 -3z M14 14 l3 2 l-3 2 l-3 -2z" fill="#fff" /><rect x="0" y="8.500" width="11" height="11" rx="1" fill="#d4173a" /><path d="M4.500 11.500 L6 10.500 V17" stroke="#fff" strokeWidth="1.300" fill="none" /></svg></Cell>
      <Cell $w={60}><svg width="21" height="16" viewBox="0 0 21 16"><rect x="5" y="4.500" width="14" height="9" fill="#fff" /><rect x="19" y="7" width="1.500" height="4" fill="#fff" /><path d="M2 0 V3 M5 0 V3 M0.500 3 H6 V6 H0.500 Z M3 6 V10 H5" stroke="#fff" fill="#1f1f1f" /></svg></Cell>
      <Cell $w={20}><svg width="20" height="17" viewBox="0 0 20 17"><path d="M6 2 H19 V12 H4 V6 M8 15.500 H16 M12 12 V15 M.5 .5 H5 V5 H.5 Z" fill="none" stroke="#fff" strokeWidth="1.100" /></svg></Cell>
      <Gap $w={20} />
      <Cell $w={68}><Clock $s={14.300} $lh={23}><Fit w={61}>10:02 AM</Fit><Fit w={67}>28-Oct-20</Fit></Clock></Cell>
      <Gap $w={21} />
      <Cell $w={24}><svg width="20" height="20" viewBox="0 0 20 20"><path d="M.6 .6 H19 V16 H12.500 L10 19 L7.500 16 H.6 Z" fill="none" stroke="#fff" strokeWidth="1.200" /></svg></Cell>
    </Bar>
  );
}

function TaskbarSecond() {
  return (
    <Bar $h={40}>
      <Cell $w={48}><WinLogo s={16} /></Cell>
      <Cell $w={48}><Magnifier s={17} c="#fff" /></Cell>
      <Cell $w={48}><TaskView s={16} /></Cell>
      <Gap $w={3} />
      <AppStrip slot={49} size={22} />
      <Spacer />
      <Clock $s={11.800} $lh={18.500}><Fit w={48}>10:02 AM</Fit><Fit w={54}>28-Oct-20</Fit></Clock>
      <Gap $w={5} />
    </Bar>
  );
}

/* ---------- Chrome ---------- */

const Browser = styled.div`
  height: 100%;
  display: flex;
  flex-direction: column;
  background: #fff;
  color: #24292e;
`;
const TabStrip = styled.div`
  height: 34px;
  padding-left: 9px;
  display: flex;
  background: #e4e8ea;
  flex-shrink: 0;
`;
const Tab = styled.div<{ $active?: boolean }>`
  width: 211px;
  flex-shrink: 0;
  padding: 0 9px 0 12px;
  display: flex;
  align-items: center;
  font-size: 12.300px;
  color: #5f6368;
  position: relative;
  ${(p) =>
    p.$active
      ? css`background: #fff; border-radius: 8px 8px 0 0;`
      : css`&::after { content: ""; position: absolute; right: 0; top: 7px; width: 1px; height: 20px; background: #85898d; }`}
`;
const TabText = styled.div`
  width: 149px;
  flex-shrink: 0;
  margin: 0 6px 0 8px;
  overflow: hidden;
  white-space: nowrap;
  mask-image: linear-gradient(90deg, #000 138px, rgba(0, 0, 0, 0.35) 149px);
`;
const tabArt: Record<string, React.ReactNode> = {
  cal: <g><rect width="16" height="16" rx="2" fill="#1a73e8" /><path d="M12 2 H16 V12 H12Z" fill="#fbbc04" /><path d="M2 12 H12 V16 H2Z" fill="#34a853" /><path d="M12 12 h4 l-4 4z" fill="#ea4335" /><rect x="3" y="3" width="10" height="10" fill="#fff" /><text x="8" y="11" textAnchor="middle" fontFamily={UI} fontWeight="bold" fontSize="7.500" fill="#1a73e8">28</text></g>,
  rs: <g><circle cx="8" cy="8" r="8" fill="#75aadb" /><text x="8" y="12" textAnchor="middle" fontFamily="Liberation Serif, serif" fontSize="11" fill="#fff">R</text></g>,
  iris: <g fill="none" stroke="#1c1c8f" strokeWidth="2"><path d="M1 15 C1 8 6 2 15 1.500" /><path d="M5 15 C5 10 9 5.500 15 5" /><path d="M9.500 15 C9.500 11.500 12 9 15 8.500" /></g>,
  jb: <g><rect width="16" height="16" fill="#fff" /><path d="M10 1.500 V10.500 C10 14 4 14 4 10" fill="none" stroke="#111" strokeWidth="2.600" /></g>,
  globe: <g><circle cx="8" cy="8" r="7.500" fill="#5f6368" /><path d="M3 5 L7 3 L9 5 L6 7 L8 9 L7 13 L4 10 Z M11 8 L14 7 L12 12 L10 11 Z" fill="#e4e8ea" /></g>,
  gd: <g><rect width="16" height="16" fill="#fff" /><circle cx="8" cy="8" r="6.500" fill="none" stroke="#25608c" strokeWidth="1.800" /><path d="M10.500 6 A3.200 3.200 0 1 0 10.500 10" fill="none" stroke="#25608c" strokeWidth="1.800" /></g>,
  uzh: <g><rect width="16" height="16" fill="#f4f5f6" /><text x="8" y="10.500" textAnchor="middle" fontFamily={ARIAL} fontWeight="bold" fontSize="6.500" fill="#111" textLength="13">UZH</text></g>,
};
const TabArt = ({ k }: { k: string }) => <svg width="16" height="16" viewBox="0 0 16 16">{tabArt[k]}</svg>;
const tabs: [string, string, number][] = [
  ["cal", "Google Agenda - Week van", 145],
  ["rs", "RStudio Server", 78],
  ["iris", "IRIS", 20],
  ["jb", "JBrowse I:1270381..1277550", 147],
  ["globe", "Worm-Expression", 93],
  ["gd", "The Genedata Biopharma Pl", 148],
  ["uzh", "UZH: STCS Nested Project M", 148],
];
const AddressRow = styled.div`
  height: 36px;
  flex-shrink: 0;
  display: flex;
  align-items: center;
  padding-left: 6px;
  color: #5f6368;
`;
const Omnibox = styled.div`
  width: 1586px;
  height: 28px;
  margin-left: 4px;
  flex-shrink: 0;
  border-radius: 14px;
  background: #f1f3f4;
  display: flex;
  align-items: center;
  padding: 0 9px 0 12px;
  font-size: 13.800px;
  color: #5f6368;
`;
const Host = styled.span`color: #202124; margin-left: 9px;`;
const Badge = styled.div`
  width: 22px;
  height: 22px;
  border-radius: 50%;
  background: #8d6e63;
  color: #fff;
  font-size: 12px;
  display: flex;
  align-items: center;
  justify-content: center;
  margin: 0 7px 0 14px;
`;
const UpdatePill = styled.div`
  width: 82px;
  height: 28px;
  border-radius: 14px;
  border: 1px solid #e37400;
  background: #fef3e8;
  color: #e37400;
  font-size: 12.300px;
  display: flex;
  align-items: center;
  padding-left: 12px;
  gap: 14px;
`;
const Bookmarks = styled.div`
  height: 33px;
  flex-shrink: 0;
  border-bottom: 1px solid #d2d4d6;
  padding: 0 0 4px 15px;
  display: flex;
  align-items: center;
  font-size: 12.300px;
  color: #3c4043;
`;
const PageArea = styled.div`
  flex: 1;
  display: flex;
  overflow: hidden;
`;
const Page = styled.div`
  width: 1903px;
  display: flex;
  flex-direction: column;
  overflow: hidden;
`;
const Scroll = styled.div<{ $w: number; $bg?: string }>`
  width: ${(p) => p.$w}px;
  flex-shrink: 0;
  background: ${(p) => p.$bg || "#f1f1f1"};
  display: flex;
  flex-direction: column;
  align-items: center;
`;
const ScrollArrow = styled.div`
  height: 17px;
  flex-shrink: 0;
  display: flex;
  align-items: center;
`;
const Thumb = styled.div<{ $w: number; $h: number; $c: string; $mt?: number }>`
  width: ${(p) => p.$w}px;
  height: ${(p) => p.$h}px;
  margin: ${(p) => p.$mt || 0}px 0 auto;
  flex-shrink: 0;
  background: ${(p) => p.$c};
`;
const GhHeader = styled.div`
  height: 62px;
  flex-shrink: 0;
  background: #24292e;
  color: #fff;
  display: flex;
  align-items: center;
  padding-left: 32px;
  font-size: 13.200px;
  font-weight: 600;
`;
const GhSearch = styled.div`
  width: 272px;
  height: 30px;
  margin: 0 16px 0 17px;
  border: 1px solid #444d56;
  border-radius: 6px;
  display: flex;
  align-items: center;
  justify-content: space-between;
  padding: 0 8px 0 12px;
  font-weight: 400;
  color: #d0d3d6;
`;
const SlashKey = styled.span`
  width: 19px;
  height: 20px;
  border: 1px solid #444d56;
  border-radius: 3px;
  color: #777d84;
  text-align: center;
  line-height: 18px;
`;
const RepoHead = styled.div`
  height: 112px;
  flex-shrink: 0;
  background: #fafbfc;
  border-bottom: 1px solid #e1e4e8;
  display: flex;
  flex-direction: column;
`;
const RepoTitle = styled.div`
  height: 64px;
  padding: 0 32px 0 32px;
  display: flex;
  align-items: center;
  font-size: 18.800px;
  color: #0366d6;
`;
const RepoTabs = styled.div`
  height: 48px;
  padding-left: 32px;
  display: flex;
  font-size: 13.300px;
  color: #24292e;
`;
const RepoTab = styled.div<{ $on?: boolean; $w: number }>`
  width: ${(p) => p.$w}px;
  display: flex;
  align-items: center;
  gap: 6px;
  padding-left: 16px;
  border-bottom: 2px solid ${(p) => (p.$on ? "#f9826c" : "transparent")};
`;
const CountButton = styled.div<{ $w: number }>`
  width: ${(p) => p.$w}px;
  height: 28px;
  border: 1px solid #d5d8da;
  border-radius: 6px;
  display: flex;
  font-size: 12px;
  color: #24292e;
  overflow: hidden;
  & > :first-child { flex: 1; display: flex; align-items: center; justify-content: center; gap: 6px; background: #fafbfc; }
  & > :last-child { width: 31px; display: flex; align-items: center; justify-content: center; border-left: 1px solid #d5d8da; background: #fff; }
`;
const Releases = styled.div`
  flex: 1;
  display: flex;
  overflow: hidden;
`;
const ReleaseMeta = styled.div`
  width: 548px;
  flex-shrink: 0;
  padding: 375px 18px 0 0;
  border-right: 1.500px solid #e1e4e8;
  display: flex;
  flex-direction: column;
  align-items: flex-end;
  color: #586069;
  font-size: 12.500px;
`;
const Latest = styled.div`
  height: 20px;
  padding: 0 7px;
  border: 1px solid #28a745;
  border-radius: 10px;
  color: #28a745;
  font-size: 11.500px;
  line-height: 18px;
  margin-bottom: 15.500px;
`;
const MetaRow = styled.div`
  height: 25px;
  display: flex;
  align-items: center;
  gap: 4px;
`;
const Compare = styled.div`
  width: 85px;
  height: 28px;
  margin-top: 12px;
  border: 1px solid #d5d8da;
  border-radius: 6px;
  background: #fafbfc;
  display: flex;
  align-items: center;
  justify-content: center;
  gap: 5px;
  font-size: 11.800px;
`;
const ReleaseMain = styled.div`
  width: 978px;
  margin-left: 16px;
  padding-top: 380px;
  display: flex;
  flex-direction: column;
  color: #24292e;
  white-space: nowrap;
  & > * { flex-shrink: 0; }
`;
const ReleaseTitle = styled.div`
  height: 40px;
  line-height: 38px;
  font-size: 30px;
  color: #0366d6;
`;
const Author = styled.div`
  height: 20px;
  margin: 8px 0 25px;
  display: flex;
  align-items: center;
  gap: 5px;
  font-size: 13px;
  color: #586069;
`;
const Notes = styled.div`
  height: 48px;
  line-height: 24px;
  font-size: 15px;
  border-bottom: 1.500px solid #e1e4e8;
`;
const AssetsHead = styled.div`
  height: 20px;
  margin: 18px 0 16px;
  display: flex;
  align-items: center;
  font-size: 13px;
  padding-left: 5px;
`;
const Count = styled.span`
  width: 21px;
  height: 20px;
  margin-left: 4px;
  border-radius: 10px;
  background: #e6e8ea;
  font-size: 12px;
  line-height: 20px;
  text-align: center;
`;
const AssetBox = styled.div`
  border: 1px solid #e1e4e8;
  border-radius: 6px 6px 0 0;
`;
const Asset = styled.div`
  height: 34px;
  padding-left: 9px;
  display: flex;
  align-items: center;
  gap: 7px;
  font-size: 13px;
  color: #0366d6;
  border-bottom: 1.500px solid #e1e4e8;
  & > svg { color: #586069; }
`;
const Downloads = styled.div`
  height: 57px;
  flex-shrink: 0;
  border-top: 1px solid #d0d2d4;
  display: flex;
  align-items: center;
  padding-left: 18px;
  font-size: 12.500px;
  color: #5a5e63;
`;
const DownloadItem = styled.div<{ $w: number }>`
  width: ${(p) => p.$w}px;
  height: 44px;
  border-right: 1px solid #c9cbcd;
  display: flex;
  align-items: center;
  padding: 0 19px 0 2px;
  gap: 13px;
`;
const ShowAll = styled.div`
  width: 78px;
  height: 32px;
  border: 1px solid #d5d8da;
  border-radius: 4px;
  color: #1a66e0;
  display: flex;
  align-items: center;
  justify-content: center;
`;
const WinRar = () => (
  <svg width="16" height="16" viewBox="0 0 16 16">
    <rect y="1" width="16" height="4.500" fill="#a82d55" /><rect y="5.500" width="16" height="5" fill="#3a55a8" /><rect y="10.500" width="16" height="4.500" fill="#2f8f3f" />
    <rect x="6" y="0" width="4" height="16" fill="#c98b2b" /><rect x="5" y="5" width="6" height="6" fill="#f0c04b" stroke="#333" strokeWidth=".7" /><rect x="7" y="6" width="2" height="3" fill="#fff" />
  </svg>
);
const Face = ({ w = 20, h = 20, round = true }: { w?: number; h?: number; round?: boolean }) => (
  <svg width={w} height={h} viewBox="0 0 20 20" preserveAspectRatio="none">
    <rect width="20" height="20" rx={round ? 8 : 0} fill="#b9b3a6" />
    <path d="M3 20 C2 10 4 1 11 1 C18 1 18 10 17 20 Z" fill="#3a2118" />
    <ellipse cx="10.500" cy="9" rx="3.600" ry="5" fill="#dfae93" />
    <path d="M5 20 C6 16 9 15 11 15 C14 15 16 17 16.500 20 Z" fill="#e9ebf0" />
  </svg>
);
const folderMarks: [string, number, number][] = [["DataAnalysisTools", 94, 18.500], ["FMI", 20, 18.500], ["Courses", 42, 18], ["Career", 35, 0]];

function Chrome() {
  return (
    <Browser>
      <TabStrip>
        {tabs.map(([k, t, w]) => (
          <Tab key={t}><TabArt k={k} /><TabText><Fit w={w}>{t}</Fit></TabText><Cross s={9} c="#5f6368" sw={1.600} /></Tab>
        ))}
        <Tab $active><FaGithub size={16} color="#24292e" /><TabText><Fit w={148}>Releases · fmi-basel/ggrossh</Fit></TabText><Cross s={9} c="#5f6368" sw={1.600} /></Tab>
        <Cell $w={44}><svg width="12" height="12"><path d="M6 0V12M0 6H12" stroke="#5f6368" strokeWidth="2" /></svg></Cell>
        <Gap $w={41} />
        <Cell $w={46}><MinGlyph w={10} /></Cell>
        <Cell $w={46}><svg width="11" height="11"><path d="M.5 3.500h7v7h-7zM3 3.500V.5h7.500V8H8" fill="none" stroke="#888" /></svg></Cell>
        <Cell $w={46}><Cross s={11} /></Cell>
      </TabStrip>
      <AddressRow>
        <Cell $w={32}><MdArrowBack size={19} /></Cell>
        <Cell $w={32}><MdArrowForward size={19} color="#bcbfc2" /></Cell>
        <Cell $w={34}><MdRefresh size={20} /></Cell>
        <Omnibox>
          <MdLock size={13} /><Host><Fit w={70}>github.com</Fit></Host><Fit w={348}>/fmi-basel/ggrosshans_LuciferaseAssayAnalyzer/releases</Fit>
          <Spacer /><MdStarBorder size={17} />
        </Omnibox>
        <Gap $w={15} />
        <svg width="16" height="16" viewBox="0 0 16 16"><rect x="1" y="1" width="14" height="14" rx="5" fill="#0f9be0" /><path d="M10.500 5.500 C9 4 5.500 4.300 5.500 6.200 C5.500 8.500 10.500 7.300 10.500 9.800 C10.500 11.800 7 12.200 5.200 10.300" fill="none" stroke="#fff" strokeWidth="1.700" /></svg>
        <Gap $w={16} />
        <svg width="15" height="17" viewBox="0 0 15 17"><path d="M.7 .7 H10 L14 5 V16 H.7 Z" fill="#d9eafb" stroke="#3a76c4" strokeWidth="1.200" /><rect x="2" y="12" width="11" height="2.500" fill="#6fa5df" /></svg>
        <Gap $w={16} />
        <MdExtension size={17} />
        <Badge>M</Badge>
        <UpdatePill><Fit w={39}>Update</Fit><svg width="4" height="14"><circle cx="2" cy="2" r="1.600" fill="#e37400" /><circle cx="2" cy="7" r="1.600" fill="#e37400" /><circle cx="2" cy="12" r="1.600" fill="#e37400" /></svg></UpdatePill>
      </AddressRow>
      <Bookmarks>
        <svg width="13" height="13">{[0, 1, 2].flatMap((r) => [0, 1, 2].map((c) => <rect key={`${r}${c}`} x={c * 5} y={r * 5} width="3" height="3" fill={[["#ea4335", "#ea4335", "#ea4335"], ["#34a853", "#4285f4", "#fbbc04"], ["#34a853", "#fbbc04", "#fbbc04"]][r][c]} />))}</svg>
        <Gap $w={10} /><Fit w={27}>Apps</Fit><Gap $w={18} />
        {folderMarks.map(([t, w, g]) => <React.Fragment key={t}><Folder w={12} h={14} /><Gap $w={10.500} /><Fit w={w}>{t}</Fit><Gap $w={g} /></React.Fragment>)}
      </Bookmarks>
      <PageArea>
        <Page>
          <GhHeader>
            <FaGithub size={32} />
            <GhSearch><Fit w={120}>Search or jump to...</Fit><SlashKey>/</SlashKey></GhSearch>
            <Fit w={82}>Pull requests</Fit><Gap $w={16} />
            <Fit w={38}>Issues</Fit><Gap $w={16} />
            <Fit w={78}>Marketplace</Fit><Gap $w={16} />
            <Fit w={47}>Explore</Fit>
            <Spacer />
            <GoBell size={16} /><Gap $w={17} /><GoPlus size={16} /><Gap $w={5} /><Caret c="#fff" s={8} /><Gap $w={16} /><Face /><Gap $w={4} /><Caret c="#fff" s={8} /><Gap $w={32} />
          </GhHeader>
          <RepoHead>
            <RepoTitle>
              <GoLock size={16} color="#6a737d" /><Gap $w={8} /><Fit w={81}>fmi-basel</Fit><Cell $w={17}>/</Cell>
              <b><Fit w={352}>ggrosshans_LuciferaseAssayAnalyzer</Fit></b>
              <Spacer />
              <CountButton $w={100}><span>Star</span><span>0</span></CountButton>
              <Gap $w={10} />
              <CountButton $w={101}><span><GoRepoForked size={15} color="#586069" />Fork</span><span>0</span></CountButton>
            </RepoTitle>
            <RepoTabs>
              <RepoTab $on $w={87}><GoCode size={16} /><Fit w={32}>Code</Fit></RepoTab>
              <RepoTab $w={90}><svg width="16" height="16"><circle cx="8" cy="8" r="7.200" fill="none" stroke="#959da5" strokeWidth="1.500" /><path d="M8 4V9M8 10.500V12" stroke="#959da5" strokeWidth="1.500" /></svg><Fit w={36}>Issues</Fit></RepoTab>
            </RepoTabs>
          </RepoHead>
          <Releases>
            <ReleaseMeta>
              <Latest><Fit w={73}>Latest release</Fit></Latest>
              <MetaRow><GoTag size={16} /><Fit w={24}>v1.1</Fit></MetaRow>
              <MetaRow><GoGitCommit size={16} /><Fit w={46}>9184831</Fit></MetaRow>
              <Compare><Fit w={49}>Compare</Fit><Caret c="#24292e" s={8} /></Compare>
            </ReleaseMeta>
            <ReleaseMain>
              <ReleaseTitle><Fit w={302}>Release of version 1.1</Fit></ReleaseTitle>
              <Author>
                <svg width="19" height="20" viewBox="0 0 20 20"><circle cx="10" cy="10" r="10" fill="#a9b3b3" /><circle cx="10" cy="7.500" r="4.500" fill="#7b5a4a" /><path d="M5.500 6 C6 1.500 14 1.500 14.500 6 Z M2 16 C4 11 16 11 18 16 L14 19.500 H6 Z" fill="#20242e" /></svg>
                <b><Fit w={42}>fgypas</Fit></b><Fit w={79}>released this</Fit>
              </Author>
              <Notes><Fit w={150}>Release of version 1.1</Fit></Notes>
              <AssetsHead><Caret c="#24292e" s={7} /><Gap $w={13} /><Fit w={39}>Assets</Fit><Count>4</Count></AssetsHead>
              <AssetBox>
                <Asset><GoPackage size={16} /><b><Fit w={148}>MyAppInstaller_web.zip</Fit></b></Asset>
                <Asset><GoPackage size={16} /><b><Fit w={148}>MyAppInstaller_web.zip</Fit></b></Asset>
                <Asset><GoFileZip size={14} /><b><Fit w={78}>Source code</Fit></b><Fit w={26}>(zip)</Fit></Asset>
                <Asset><GoFileZip size={14} /><b><Fit w={78}>Source code</Fit></b><Fit w={42}>(tar.gz)</Fit></Asset>
              </AssetBox>
            </ReleaseMain>
          </Releases>
        </Page>
        <Scroll $w={17}>
          <ScrollArrow><Caret up c="#a3a3a3" s={8} /></ScrollArrow>
          <Thumb $w={13} $h={674} $c="#c1c1c1" />
          <ScrollArrow><Caret c="#505050" s={8} /></ScrollArrow>
        </Scroll>
      </PageArea>
      <Downloads>
        <DownloadItem $w={219}><WinRar /><Fit w={137}>MyAppInstaller_we....zip</Fit><Spacer /><Chevron s={10} dir="up" /></DownloadItem>
        <Gap $w={14} />
        <DownloadItem $w={219}><WinRar /><Fit w={137}>MyAppInstaller_we....zip</Fit><Spacer /><Chevron s={10} dir="up" /></DownloadItem>
        <Spacer />
        <ShowAll><Fit w={45}>Show all</Fit></ShowAll>
        <Cell $w={36}><Cross s={10} c="#5f6368" sw={1.700} /></Cell>
      </Downloads>
    </Browser>
  );
}

/* ---------- Explorer ---------- */

const ExTitle = styled.div`
  height: 30px;
  flex-shrink: 0;
  display: flex;
  align-items: center;
  color: #8e8e8e;
  font-size: 12.300px;
`;
const ExTabs = styled.div`
  height: 24px;
  flex-shrink: 0;
  display: flex;
  border-bottom: 1px solid #dadbdc;
  font-size: 11.500px;
  color: #333;
`;
const ExFile = styled.div`
  width: 56px;
  background: #0065b3;
  color: #fff;
  display: flex;
  align-items: center;
  justify-content: center;
`;
const ExNav = styled.div`
  height: 42px;
  flex-shrink: 0;
  display: flex;
  align-items: center;
  font-size: 11.800px;
  color: #111;
`;
const ExBox = styled.div<{ $w: number }>`
  width: ${(p) => p.$w}px;
  height: 29px;
  flex-shrink: 0;
  border: 1px solid #d9d9d9;
  display: flex;
  align-items: center;
`;
const SearchHint = styled.span`color: #707070;`;
const ExBody = styled.div`
  height: 399px;
  flex-shrink: 0;
  display: flex;
  overflow: hidden;
`;
const Tree = styled.div`
  width: 140px;
  flex-shrink: 0;
  overflow: hidden;
  font-size: 11.800px;
  color: #111;
`;
const TreeRow = styled.div<{ $lvl: number; $mt?: number; $sel?: boolean }>`
  height: 24px;
  margin-top: ${(p) => p.$mt || 0}px;
  padding-left: ${(p) => (p.$lvl ? 31 : 24)}px;
  display: flex;
  align-items: center;
  white-space: nowrap;
  background: ${(p) => (p.$sel ? "#d9d9d9" : "transparent")};
`;
const Pin = styled(MdPushPin)`
  margin: 0 2px 0 auto;
  color: #8795a5;
  transform: rotate(45deg);
`;
const FileList = styled.div`
  flex: 1;
  border-left: 1px solid #ececec;
  display: flex;
  flex-direction: column;
  font-size: 11.800px;
  color: #111;
`;
const ListHead = styled.div`
  height: 31px;
  flex-shrink: 0;
  padding: 0 0 6px 12px;
  display: flex;
  align-items: center;
  gap: 10px;
  color: #4c607a;
`;
const ListRows = styled.div`
  height: 352px;
  overflow: hidden;
`;
const FileRow = styled.div<{ $sel?: boolean }>`
  height: 21px;
  margin-left: 15px;
  padding-left: 4px;
  display: flex;
  align-items: center;
  background: ${(p) => (p.$sel ? "#d9d9d9" : "transparent")};
`;
const HScroll = styled.div`
  height: 16px;
  flex-shrink: 0;
  background: #f0f0f0;
  display: flex;
  align-items: center;
`;
const ExStatus = styled.div`
  flex: 1;
  display: flex;
  align-items: center;
  font-size: 11.800px;
  color: #1e395b;
`;
const VLine = styled.div<{ $h: number; $c?: string; $m?: number }>`
  width: 1px;
  height: ${(p) => p.$h}px;
  margin: 0 ${(p) => p.$m || 0}px;
  background: ${(p) => p.$c || "#ddd"};
  flex-shrink: 0;
`;

const fileArt: Record<string, React.ReactNode> = {
  mat: <g><path d="M3 1 H11 L14 4 V15 H3 Z" fill="#eef3f9" stroke="#a9b6c6" /><path d="M4 8 H13 M4 10.500 H13 M4 13 H13 M7 7 V15 M10 7 V15" stroke="#b9c6d6" strokeWidth=".8" /><path d="M0 5 L4 1 L5 0 L8 5 L4 4 Z" fill="#d24a1e" /><path d="M0 5 L3 2 L3.500 5 Z" fill="#2f6fae" /></g>,
  xls: <g><rect x="6" y="1" width="9.500" height="14" fill="#fff" stroke="#8a9a8f" /><path d="M9 4 H14 M9 7 H14 M9 10 H14 M9 13 H14 M11.500 3 V14" stroke="#6fb28b" strokeWidth="1" /><rect x="0" y="2.500" width="9" height="11" fill="#1f7145" /><path d="M2.500 5 L6.500 11 M6.500 5 L2.500 11" stroke="#fff" strokeWidth="1.400" /></g>,
  csv: <g><path d="M6 .5 H12 L15.500 4 V15 H6 Z" fill="#fff" stroke="#8a9a8f" /><circle cx="12" cy="11.500" r="1.700" fill="none" stroke="#8fc3a4" strokeWidth="1.200" /><rect x="0" y="2.500" width="8.500" height="11" fill="#1f7145" /><path d="M2.200 5 L6.200 11 M6.200 5 L2.200 11" stroke="#fff" strokeWidth="1.400" /></g>,
  doc: <g><rect x="6" y="1" width="9.500" height="14" fill="#fff" stroke="#8a93a5" /><path d="M9 4 H14 M9 6.500 H14 M9 9 H14 M9 11.500 H14" stroke="#7c8cab" strokeWidth=".9" /><rect x="0" y="2.500" width="9.500" height="11" fill="#2b579a" /><path d="M1.700 5.500 L3 10.500 L4.700 6.500 L6.300 10.500 L7.700 5.500" fill="none" stroke="#fff" strokeWidth="1.100" /></g>,
  txt: <g><rect x="3" y="1.500" width="11" height="13" fill="#fafafa" stroke="#9b9b9b" /><path d="M5 4 H12 M5 6.500 H12 M5 9 H12 M5 11.500 H12" stroke="#a6a6a6" strokeWidth=".9" /></g>,
};
const FileIcon = ({ k }: { k: string }) => <svg width="16" height="16" viewBox="0 0 16 16">{fileArt[k]}</svg>;
const files: [string, string, number][] = [
  ["csv", "2017-03-27 Test59_molt_detection_results.csv", 237],
  ["mat", "2017-03-27 Test59.mat", 117],
  ["mat", "300920OP50vsNA22.mat", 128],
  ["mat", "300920OP50vsNA22_old.mat", 150],
  ["doc", "Results_6_MM.docx", 103],
  ["doc", "Intro_14_MM_.docx", 102],
  ["doc", "Intro_9_MM.docx", 91],
  ["mat", "20200805_hbl1_degr_lin29_lin46_mut.mat", 216],
  ["xls", "20200805_hbl1_degr_lin29_lin46_mut_pd.xlsx", 233],
  ["mat", "SR_20200723_MYRF-degron_25h_Auxin.mat", 229],
  ["txt", "20200805_hbl1_degr_lin29_lin46_mut.TXT", 214],
  ["mat", "SR_20200723_MYRF-degron_25h_Auxin_2.mat", 240],
  ["mat", "SR_20200723_MYRF-degron_25h_Auxin_1.mat", 240],
  ["xls", "SR_20200723_MYRF-degron_25h_Auxin_1_pd.xlsx", 257],
  ["xls", "SR_20200723_MYRF-degron_25h_Auxin_2_pd.xlsx", 257],
  ["txt", "SR_20200723_MYRF-degron_25h_Auxin_1.TXT", 238],
  ["txt", "SR_20200723_MYRF-degron_25h_Auxin_2.TXT", 238],
];
const treeArt: Record<string, React.ReactNode> = {
  net: <g><path d="M4 0 H12 V12 H4Z" fill="#f3cf6a" /><path d="M4 1 L7 0 V12 H4Z" fill="#fbe7a8" /><path d="M2 12 H14 V14 H2Z" fill="#8a8f93" /><ellipse cx="8" cy="13" rx="4" ry="2.500" fill="#3aa845" /></g>,
  folder: <g><path d="M3 1 H11 V3 H13 V15 H3 Z" fill="#f3cf6a" /><path d="M3 2 L6 1 V14 L3 15 Z" fill="#fbe7a8" /></g>,
  dropbox: <g><path d="M4 1 l4 2.500 l-4 2.500 l-4 -2.500z M12 1 l4 2.500 l-4 2.500 l-4 -2.500z M12 6 l4 2.500 l-4 2.500 l-4 -2.500z M8 11 l4 2 l-4 2 z" fill="#0a6cf0" /><circle cx="4" cy="11" r="4" fill="#5cb85c" /><path d="M2 11 L3.700 12.700 L6 9.500" stroke="#fff" fill="none" strokeWidth="1.200" /></g>,
  cloud: <path d="M4 13 C-1 13 -.5 7.500 3.500 7.500 C4.500 3 10.500 3 11.500 6.500 C16.500 6 17 13 13 13 Z" fill="#1581d0" />,
  pc: <g><path d="M5 2 L15 4 V12 L5 9.500 Z" fill="#3f9ed9" stroke="#8aa0b0" /><path d="M1 12 L8 11 L11 14 L4 15.500 Z" fill="#c9cfd4" /></g>,
  cube: <g><path d="M2 4 L8 1 L14 4 V12 L8 15 L2 12 Z" fill="#2bb3d4" /><path d="M2 4 L8 6 V15 L2 12Z" fill="#7fe0ee" /><path d="M8 6 L14 4 V12 L8 15Z" fill="#0e8fb0" /></g>,
  desk: <g><rect x="1" y="3" width="14" height="10.500" fill="#1e90e6" stroke="#0b6fc0" /><path d="M2 4 H14 L2 12Z" fill="#4bb0f5" /></g>,
  down: <path d="M5.500 2 H10.500 V8 H14.500 L8 14.500 L1.500 8 H5.500Z" fill="#2f86d6" />,
  page: <g><rect x="2.500" y="1.500" width="11" height="13" fill="#f4f7fa" stroke="#8a939c" /><path d="M4.500 4.500 H11.500 M4.500 7 H11.500" stroke="#2a8fd6" strokeWidth="1.200" /><path d="M4.500 9.500 H8 M4.500 12 H8" stroke="#7a8a99" /><rect x="9" y="9" width="3" height="3.500" fill="#4a9ad6" /></g>,
  music: <path d="M7 1 C8 4 12 5 10.500 9 C10.500 7 9 6.500 8.500 6.500 V12 C8.500 15 4 15 4 12.500 C4 10.500 6 10 7 10.500 Z" fill="#1e90e6" />,
};
const treeRows: [string, string, number, number, number, boolean?][] = [
  ["net", "gstudrep", 47, 1, 0, true],
  ["folder", "meeumilo", 53, 1, 0, true],
  ["folder", "Data", 23, 1, 0],
  ["folder", "ggrosshans_Luci", 87, 1, 0],
  ["folder", "Milou - tmp", 63, 1, 0],
  ["folder", "scripts", 34, 1, 0],
  ["dropbox", "Dropbox (FMI)", 76, 0, 8],
  ["cloud", "OneDrive", 48, 0, 8],
  ["pc", "This PC", 38, 0, 8],
  ["cube", "3D Objects", 57, 1, 0],
  ["desk", "Desktop", 42, 1, 0],
  ["down", "Downloads", 58, 1, 0],
  ["folder", "ggrossha tungsten", 98, 1, 0],
  ["folder", "ggrossha tungsten", 98, 1, 0],
  ["page", "meeumilo", 53, 1, 0],
  ["music", "Music", 31, 1, 0],
];

function Explorer() {
  return (
    <Win $x={198} $y={137} $w={560} $h={519.5} $shadow="0 5px 14px rgba(0,0,0,.4)">
      <ExTitle>
        <Gap $w={10} /><Folder w={10} h={13} /><Gap $w={11} /><VLine $h={13} $c="#777" /><Gap $w={11} />
        <svg width="13" height="14" viewBox="0 0 13 14"><rect x=".5" y=".5" width="12" height="13" fill="#fff" stroke="#999" /><path d="M3 7 L5.500 10 L11 3" fill="none" stroke="#e05a1a" strokeWidth="1.700" /></svg>
        <Gap $w={10} /><Folder w={10} h={14} /><Gap $w={11} />
        <svg width="7" height="7"><path d="M0 .6H7M0 3h7L3.500 6.500z" fill="#111" stroke="#111" strokeWidth=".8" /></svg>
        <Gap $w={8} /><VLine $h={13} $c="#777" /><Gap $w={8} /><Fit w={63}>Milou - tmp</Fit>
        <Gap $w={274} /><MinGlyph w={10} /><Gap $w={35} /><MaxGlyph s={10} />
      </ExTitle>
      <ExTabs>
        <ExFile><Fit w={18}>File</Fit></ExFile>
        <Cell $w={73} $j="flex-start"><Gap $w={14} /><Fit w={30}>Home</Fit></Cell>
        <Cell $w={58} $j="flex-start"><Fit w={29}>Share</Fit></Cell>
        <Cell $w={58} $j="flex-start"><Fit w={25}>View</Fit></Cell>
      </ExTabs>
      <ExNav>
        <Gap $w={12} /><MdArrowBack size={16} color="#555" /><Gap $w={14} /><MdArrowForward size={16} color="#ccc" /><Gap $w={11} />
        <Chevron s={7} c="#555" sw={1.800} /><Gap $w={12} />
        <svg width="11" height="13" viewBox="0 0 11 13"><path d="M5.500 13 V1 M1 5.500 L5.500 1 L10 5.500" fill="none" stroke="#555" strokeWidth="1.600" /></svg>
        <Gap $w={7} />
        <ExBox $w={243}>
          <Gap $w={4} /><Folder w={10} h={14} /><Gap $w={8} /><Fit w={8}>«</Fit><Gap $w={8} /><Fit w={32}>mee...</Fit><Gap $w={7} /><Chevron s={7} dir="right" /><Gap $w={8} /><Fit w={33}>Milo...</Fit><Gap $w={7} /><Chevron s={7} dir="right" />
          <Spacer /><Chevron s={10} sw={2} /><Gap $w={9} /><VLine $h={27} $c="#d9d9d9" /><Cell $w={30}><MdRefresh size={15} color="#555" /></Cell>
        </ExBox>
        <Gap $w={12} />
        <ExBox $w={240}><Gap $w={14} /><Magnifier s={13} c="#888" /><Gap $w={13} /><SearchHint><Fit w={102}>Search Milou - tmp</Fit></SearchHint></ExBox>
      </ExNav>
      <ExBody>
        <Tree>
          {treeRows.map(([k, t, w, lvl, mt, pin], i) => (
            <TreeRow key={i} $lvl={lvl} $mt={mt} $sel={i === 14}>
              <svg width="16" height="16" viewBox="0 0 16 16">{treeArt[k]}</svg><Gap $w={lvl ? 6 : 5} /><Fit w={w}>{t}</Fit>
              {pin && <Pin size={12} />}
            </TreeRow>
          ))}
        </Tree>
        <Scroll $w={16} $bg="#f0f0f0">
          <ScrollArrow><Chevron s={10} dir="up" sw={1.800} /></ScrollArrow>
          <Thumb $w={15} $h={168} $c="#cdcdcd" $mt={67} />
          <ScrollArrow><Chevron s={10} sw={1.800} /></ScrollArrow>
        </Scroll>
        <Gap $w={2} />
        <FileList>
          <ListHead><Check s={13} w={13} /><Fit w={32}>Name</Fit><Gap $w={262} /><VLine $h={24} $c="#e0e0e0" /></ListHead>
          <ListRows>
            {files.map(([k, t, w], i) => (
              <FileRow key={t} $sel={i === 0}>{i === 0 ? <Check on s={13} w={13} /> : <Gap $w={13} />}<Gap $w={2} /><FileIcon k={k} /><Gap $w={4} /><Fit w={w}>{t}</Fit></FileRow>
            ))}
          </ListRows>
          <HScroll><Cell $w={17}><Chevron s={9} dir="left" sw={1.800} /></Cell><Thumb $w={177} $h={16} $c="#cdcdcd" /></HScroll>
        </FileList>
      </ExBody>
      <ExStatus>
        <Gap $w={14} /><Fit w={44}>80 items</Fit><VLine $h={12} $m={10} /><Fit w={78}>1 item selected</Fit><Gap $w={7} /><Fit w={38}>38.2 KB</Fit><VLine $h={12} $m={10} />
        <Fit w={28}>State:</Fit><Gap $w={3} />
        <svg width="16" height="16"><circle cx="8" cy="8" r="7.500" fill="#5cb531" /><path d="M4 8 A4 4 0 0 1 11 5 M12 8 A4 4 0 0 1 5 11" fill="none" stroke="#fff" strokeWidth="2" /></svg>
        <Gap $w={3} /><Fit w={137}>Offline (background sync)</Fit><VLine $h={12} $m={8} />
      </ExStatus>
    </Win>
  );
}

/* ---------- Word ---------- */

const WordTop = styled.div`
  height: 50px;
  flex-shrink: 0;
  position: relative;
  display: flex;
  flex-direction: column;
`;
const Circuit = styled.div`
  position: absolute;
  right: 0;
  top: 0;
`;
const WordTitle = styled.div`
  height: 26px;
  position: relative;
  display: flex;
  align-items: center;
  font-size: 11.500px;
  color: #444;
`;
const WordTabs = styled.div`
  height: 24px;
  position: relative;
  display: flex;
  align-items: stretch;
  font-size: 11.300px;
  color: #555;
`;
const FileTab = styled.div`
  width: 58px;
  background: #2b579a;
  color: #fff;
  display: flex;
  align-items: center;
  justify-content: center;
`;
const HomeTab = styled.div`
  width: 56px;
  margin: 0 12px 0 3px;
  border: 1px solid #d5d5d5;
  border-bottom: 0;
  background: #fff;
  color: #2b579a;
  display: flex;
  align-items: center;
  justify-content: center;
`;
const Ribbon = styled.div`
  height: 90px;
  flex-shrink: 0;
  border-top: 1px solid #e3e3e3;
  border-bottom: 1px solid #d0d0d0;
  display: flex;
  padding-top: 3px;
  color: #555;
  font-size: 11.500px;
`;
const Group = styled.div<{ $w: number }>`
  width: ${(p) => p.$w}px;
  height: 83px;
  flex-shrink: 0;
  border-right: 1px solid #e1e1e1;
  display: flex;
  flex-direction: column;
`;
const GroupLabel = styled.div`
  height: 14px;
  margin-top: auto;
  display: flex;
  align-items: center;
  justify-content: center;
  color: #666;
  font-size: 11px;
  padding-top: 3px;
`;
const RRow = styled.div<{ $h: number; $mt?: number; $pl?: number }>`
  height: ${(p) => p.$h}px;
  margin-top: ${(p) => p.$mt || 0}px;
  padding-left: ${(p) => p.$pl || 0}px;
  flex-shrink: 0;
  display: flex;
  align-items: center;
`;
const Combo = styled.div<{ $w: number }>`
  width: ${(p) => p.$w}px;
  height: 22px;
  flex-shrink: 0;
  border: 1px solid #b5b5b5;
  display: flex;
  align-items: center;
  justify-content: space-between;
  padding: 0 4px 0 2px;
  color: #333;
`;
const Lit = styled.div<{ $w: number }>`
  width: ${(p) => p.$w}px;
  height: 22px;
  flex-shrink: 0;
  background: #c5d6f2;
  display: flex;
  align-items: center;
  justify-content: center;
  gap: 4px;
`;
const Gallery = styled.div`
  width: 376px;
  height: 60px;
  margin: 1px 0 0 4px;
  border: 1px solid #bcbcbc;
  display: flex;
`;
const StyleItem = styled.div<{ $w: number }>`
  width: ${(p) => p.$w}px;
  display: flex;
  flex-direction: column;
  align-items: center;
  overflow: hidden;
`;
const Sample = styled.div<{ $s: number; $c: string; $light?: boolean }>`
  height: 34px;
  margin-bottom: 3px;
  flex-shrink: 0;
  display: flex;
  align-items: flex-end;
  justify-content: center;
  overflow: hidden;
  font-family: ${CALIBRI};
  font-size: ${(p) => p.$s}px;
  line-height: ${(p) => p.$s * 1.25}px;
  color: ${(p) => p.$c};
  font-weight: ${(p) => (p.$light ? 300 : 400)};
  padding-bottom: 2px;
`;
const PasteStack = styled.div`
  display: flex;
  flex-direction: column;
  align-items: center;
`;
const GalleryKeys = styled.div`
  width: 15px;
  margin-left: auto;
  border-left: 1px solid #bcbcbc;
  display: flex;
  flex-direction: column;
  & > div { flex: 1; display: flex; align-items: center; justify-content: center; border-bottom: 1px solid #cfcfcf; }
  & > div:last-child { border-bottom: 0; }
`;
const DocArea = styled.div`
  flex: 1;
  display: flex;
  overflow: hidden;
  background: #f1f1f1;
`;
const Paper = styled.div`
  width: 972px;
  flex-shrink: 0;
  border-right: 1px solid #c9c9c9;
  background: #fff;
  overflow: hidden;
  font-family: ${CALIBRI};
  font-size: 17.200px;
  color: #111;
`;
const DocLine = styled.div`
  height: 25.100px;
  display: flex;
  align-items: center;
  padding-left: 67px;
  &:first-child { margin-top: -6px; }
`;
const Mark = styled.div<{ $mt: number; $w: number }>`
  margin: ${(p) => p.$mt}px 0 0 36px;
  width: ${(p) => p.$w}px;
  height: 24px;
  background: #ff0;
  display: flex;
  align-items: center;
`;
const DocGutter = styled.div`
  height: 17px;
  flex-shrink: 0;
  background: #efefef;
`;
const WordStatus = styled.div`
  height: 21px;
  flex-shrink: 0;
  background: #2b579a;
  color: #fff;
  display: flex;
  align-items: center;
  font-size: 10.300px;
`;
const StatusLit = styled.div`
  width: 33px;
  height: 21px;
  background: #1e4583;
  display: flex;
  align-items: center;
  justify-content: center;
`;

/* Marker, text and the right end of each line on the ruler. */
const docLines: [string, string, number][] = [
  ["", "to plot together in one boxplot. A new pop-up menu will appear in which you can select the", 1212],
  ["", "order of the conditions. Select a unique number for each condition. The number refers to the", 1230],
  ["", "position in the box plot. The condition with number 1 will be plotted as the first condition, the", 1239],
  ["", "condition with number 2 will be plotted as the second condition, and so on. Three boxplot will", 1240],
  ["", "be generated: molts, intermolts, larval stages. Boxplots can be saved: File -> save", 1090],
  ["13)", "Make heatmaps: a pop-up menu will appear in which you can indicate whether you want the", 1225],
  ["", "pre-hatch to be included in the heatmap, choose yes or no. A new pop-up menu will appear in", 1240],
  ["", "which you can indicate whether you want to plot all strains together in one heatmap or plot", 1215],
  ["", "strains in separate heatmaps. Plotting strains separately is generally recommended. A new pop-", 1258],
  ["", "up menu will appear in which you can indicate on which molt the data should be sorted. For", 1216],
  ["", "example, if you choose molt 1, the animal that enters molt 1 the earliest will appear on top of", 1236],
  ["", "the heatmap and the animal that enters molt 1 the latest will appear on the bottom of the", 1197],
  ["", "heatmap. Two different plots are generated. The blue-yellow plot shows the annotation of the", 1244],
  ["", "molts in yellow and intermolts in blue. The white-grey-black heatmap shows the trend corrected", 1266],
  ["", "luminescence values, with values ranging from low (black) to high (white) corresponding to the", 1250],
  ["", "molts and intermolts respectively.", 565],
  ["14)", "Statistics to Excel:", 383],
];

const Lines = ({ kind = "left", w = 12 }: { kind?: string; w?: number }) => (
  <svg width={w} height="11" viewBox="0 0 12 11">
    {[0, 1, 2, 3, 4].map((i) => {
      const len = kind === "just" || i % 2 === 0 ? 12 : 8;
      const x = kind === "right" ? 12 - len : kind === "center" ? (12 - len) / 2 : 0;
      return <rect key={i} x={x} y={i * 2.4} width={len} height="1.100" fill="#666" />;
    })}
  </svg>
);
const ListGlyph = ({ kind }: { kind: string }) => (
  <svg width="15" height="14" viewBox="0 0 15 14">
    {[1, 6, 11].map((y, i) => (
      <g key={y}>
        {kind === "bul" && <rect x="0" y={y} width="2" height="2" fill="#4472b8" />}
        {kind === "num" && <path d={`M1 ${y - 1}v3.500`} stroke="#3b6cb8" strokeWidth="1.300" />}
        {kind === "mul" && <rect x={i * 2.5} y={y} width="1.500" height="2.500" fill="#3b6cb8" />}
        <rect x={kind === "mul" ? 3 + i * 2.5 : 5} y={y + 0.4} width={kind === "mul" ? 11 - i * 2.5 : 10} height="1.200" fill="#777" />
      </g>
    ))}
  </svg>
);
const IndentGlyph = ({ out }: { out?: boolean }) => (
  <svg width="15" height="12" viewBox="0 0 15 12">
    <path d="M6 1H15M8 4H15M8 7H15M6 10.500H15" stroke="#777" strokeWidth="1.200" />
    <path d={out ? "M7 5.500H1M3.500 3L1 5.500L3.500 8" : "M0 5.500H6M3.500 3L6 5.500L3.500 8"} stroke="#2f6fb8" strokeWidth="1.400" fill="none" />
  </svg>
);
const Launcher = () => (
  <svg width="7" height="7"><path d="M.5 5V.5H5M3 3l3 3M6.500 3v3.500H3" fill="none" stroke="#777" /></svg>
);
const RSep = () => <VLine $h={18} $c="#dcdcdc" />;

function Word() {
  return (
    <Win $x={707} $y={96} $w={1016} $h={822} $border="#4a72b0" $shadow="1px 3px 9px rgba(0,0,0,.6)">
      <WordTop>
        <Circuit>
          <svg width="560" height="50" viewBox="3083 97 560 50">
            <g fill="none" stroke="#e7e7e7" strokeWidth="4">
              <circle cx="3421" cy="115" r="27" strokeWidth="6" /><circle cx="3170" cy="136" r="17" strokeWidth="5" />
              <circle cx="3327" cy="111" r="4" strokeWidth="2.500" /><path d="M3280 111 H3322 M3332 111 H3345 L3378 146 M3220 128 L3230 140 H3300 M3255 146 L3262 140 H3350 L3362 146" />
              <path d="M3515 146 L3535 121 H3640 M3580 146 L3622 97 M3592 146 L3636 97" /><circle cx="3216" cy="127" r="3.500" strokeWidth="2.500" />
            </g>
            <path d="M3408 127 L3430 106 M3412 102 H3434 V124" stroke="#e4e4e4" strokeWidth="7" fill="none" />
            <path d="M3163 142 V131 H3176 M3166 134 L3178 146" stroke="#e4e4e4" strokeWidth="4" fill="none" />
          </svg>
        </Circuit>
        <WordTitle>
          <Gap $w={7} /><svg width="17" height="16" viewBox="0 0 24 24">{appArt.word}</svg><Gap $w={12} />
          <svg width="13" height="13"><path d="M.8.8H12.200V12.200H.8Z" fill="#fff" stroke="#8a5bb0" strokeWidth="1.600" /><rect x="3.500" y="7.500" width="6" height="5" fill="#8a5bb0" /></svg><Gap $w={12} />
          <svg width="15" height="13" viewBox="0 0 15 13"><path d="M5 1 L1 4.500 L5 8 M1 4.500 H9 C14 4.500 14 10 11 12" fill="none" stroke="#3f6fb5" strokeWidth="2.200" /></svg>
          <Gap $w={4} /><Caret /><Gap $w={13} />
          <svg width="13" height="13" viewBox="0 0 13 13"><path d="M4 2 A5.300 5.300 0 1 0 9.500 2.300 M8 5 V1 H12.500" fill="none" stroke="#3f7fc0" strokeWidth="2.200" /></svg><Gap $w={10} />
          <svg width="11" height="15" viewBox="0 0 11 15"><circle cx="4" cy="3.500" r="2.800" fill="none" stroke="#9cb8d8" strokeWidth="1.300" /><path d="M3 3 H5 V8 L10 9 V14.500 H4 L1 10 L3 10.500Z" fill="#555" /></svg>
          <Gap $w={5} /><Caret c="#333" /><Gap $w={14} /><Caret /><Gap $w={205} />
          <Fit w={282}>LuciferaseAssayAnalyzer_Documentation.docx - Word</Fit>
          <Spacer />
          <Cell $w={26}><b>?</b></Cell>
          <Cell $w={27}><svg width="13" height="11"><path d="M.5.5H12.500V10.500H.5ZM6.500 9V3M4 5.500L6.500 3L9 5.500" fill="none" stroke="#666" strokeWidth="1.200" /></svg></Cell>
          <Cell $w={26}><svg width="10" height="8"><rect y="5" width="10" height="2" fill="#666" /></svg></Cell>
          <Cell $w={26}><svg width="11" height="10"><path d="M.5 1H10.500V9.500H.5Z" fill="none" stroke="#666" /><rect width="11" height="2" fill="#666" /></svg></Cell>
          <Cell $w={27}><Cross s={10} c="#555" sw={1.500} /></Cell>
        </WordTitle>
        <WordTabs>
          <FileTab><Fit w={20}>FILE</Fit></FileTab>
          <HomeTab><Fit w={34}>HOME</Fit></HomeTab>
          {([["INSERT", 37, 62], ["DESIGN", 41, 64.500], ["PAGE LAYOUT", 71, 96], ["REFERENCES", 67, 91], ["MAILINGS", 52, 77], ["REVIEW", 41, 64], ["VIEW", 28, 51], ["ZOTERO", 44, 67.500], ["EndNote X7", 63, 187], ["Meeuse, Milou", 76, 81]] as [string, number, number][]).map(([t, w, s]) => (
            <Cell key={t} $w={s} $j="flex-start"><Fit w={w}>{t}</Fit></Cell>
          ))}
          <Cell $w={11} $j="flex-start"><Caret /></Cell>
          <Face w={24} h={22} round={false} />
        </WordTabs>
      </WordTop>
      <Ribbon>
        <Group $w={68}>
          <RRow $h={68}>
            <Gap $w={8} />
            <Cell $w={34}>
              <PasteStack>
                <svg width="27" height="30" viewBox="0 0 27 30"><rect x="0" y="3" width="22" height="25" fill="#ecc47c" /><path d="M5 5V2H9C9-.5 13-.5 13 2H17V5Z" fill="#666" /><path d="M15 14H23L26.500 18V30H15Z" fill="#fff" stroke="#777" /></svg>
                <Fit w={27}>Paste</Fit><Gap $h={4} /><Caret />
              </PasteStack>
            </Cell>
            <Cell $w={24}>
              <svg width="15" height="60" viewBox="0 0 15 60">
                <path d="M4 2 L10 12 M11 2 L5 12" stroke="#999" strokeWidth="1.400" /><circle cx="4" cy="14" r="2.200" fill="none" stroke="#999" strokeWidth="1.300" /><circle cx="11" cy="14" r="2.200" fill="none" stroke="#999" strokeWidth="1.300" />
                <path d="M1.500 24 H8 V34 H1.500Z M6 28 H13.500 V38 H6Z" fill="#fff" stroke="#aaa" strokeWidth="1.200" />
                <path d="M2 52 L9 46 L12 50 L6 58Z" fill="#eabd6a" /><path d="M8 49 L13 45 M11 51 L14 48" stroke="#666" strokeWidth="2" />
              </svg>
            </Cell>
          </RRow>
          <GroupLabel><Fit w={45}>Clipboard</Fit><Gap $w={8} /><Launcher /></GroupLabel>
        </Group>
        <Group $w={242}>
          <RRow $h={26} $mt={6} $pl={3}>
            <Combo $w={87}><Fit w={72}>Calibri (Body)</Fit><Caret /></Combo><Combo $w={42}><span>11</span><Caret /></Combo>
            <Gap $w={3} /><Cell $w={20}>A<Chevron s={6} dir="up" c="#2f6fb8" /></Cell><Cell $w={20}>A<Chevron s={6} c="#2f6fb8" /></Cell><RSep />
            <Cell $w={36}><Fit w={14}>Aa</Fit><Gap $w={4} /><Caret /></Cell><RSep />
            <Cell $w={26}>A<svg width="8" height="8"><path d="M0 5L4 1L8 4L4 8Z" fill="#e8808f" /></svg></Cell>
          </RRow>
          <RRow $h={26} $mt={6} $pl={3}>
            <Cell $w={18}><b>B</b></Cell><Cell $w={26}><b><i>I</i></b></Cell><Cell $w={16}><b><u>U</u></b></Cell><Cell $w={14}><Caret /></Cell>
            <Cell $w={18}><s>abc</s></Cell><Cell $w={24}><b>x</b><sub>2</sub></Cell><Cell $w={18}><b>x</b><sup>2</sup></Cell><Cell $w={10}><RSep /></Cell>
            <Cell $w={18}><svg width="15" height="16"><text x="1" y="14" fontFamily={UI} fontSize="16" fontWeight="bold" fill="#fff" stroke="#5b93d0" strokeWidth="1">A</text></svg></Cell>
            <Cell $w={8}><Caret /></Cell>
            <Cell $w={26}><svg width="17" height="17"><text x="0" y="9" fontFamily={UI} fontSize="10" fill="#555">ab</text><path d="M5 12L15 2" stroke="#666" strokeWidth="2" /><rect x=".5" y="13" width="15" height="3.500" fill="#fff" stroke="#aaa" /></svg></Cell>
            <Cell $w={6}><Caret /></Cell>
            <Cell $w={26}><svg width="16" height="18"><text x="3" y="12" fontFamily={UI} fontSize="14" fontWeight="bold" fill="#555">A</text><rect y="14" width="16" height="4" fill="#f00" /></svg></Cell>
            <Cell $w={6}><Caret /></Cell>
          </RRow>
          <GroupLabel><Gap $w={90} /><Fit w={21}>Font</Fit><Gap $w={104} /><Launcher /></GroupLabel>
        </Group>
        <Group $w={205}>
          <RRow $h={26} $mt={6} $pl={2}>
            <Cell $w={24}><ListGlyph kind="bul" /></Cell><Cell $w={8}><Caret /></Cell>
            <Lit $w={32}><ListGlyph kind="num" /><Caret c="#333" /></Lit>
            <Cell $w={22}><ListGlyph kind="mul" /></Cell><Cell $w={8}><Caret /></Cell><Cell $w={10}><RSep /></Cell>
            <Cell $w={20}><IndentGlyph out /></Cell><Cell $w={20}><IndentGlyph /></Cell><Cell $w={10}><RSep /></Cell>
            <Cell $w={20}><svg width="14" height="16"><text x="0" y="8" fontFamily={UI} fontSize="9" fill="#3b6cb8">A</text><text x="0" y="16" fontFamily={UI} fontSize="9" fill="#8a4bb0">Z</text><path d="M10.500 2V13M8 10.500L10.500 13L13 10.500" stroke="#777" fill="none" /></svg></Cell>
            <Cell $w={8}><RSep /></Cell><Cell $w={16}>¶</Cell>
          </RRow>
          <RRow $h={26} $mt={6} $pl={3}>
            <Lit $w={21}><Lines /></Lit><Cell $w={22}><Lines kind="center" /></Cell><Cell $w={20}><Lines kind="right" /></Cell><Cell $w={20}><Lines kind="just" /></Cell><Cell $w={8}><RSep /></Cell>
            <Cell $w={20}><svg width="14" height="14"><path d="M6 2H14M6 5.500H14M6 9H14M6 12.500H14" stroke="#777" strokeWidth="1.200" /><path d="M2.500 1V13M.5 3.500L2.500 1L4.500 3.500M.5 10.500L2.500 13L4.500 10.500" fill="none" stroke="#2f6fb8" strokeWidth="1.200" /></svg></Cell>
            <Cell $w={8}><Caret /></Cell><Cell $w={10}><RSep /></Cell>
            <Cell $w={22}><svg width="16" height="16"><path d="M2 7L7 2L12 7L7 11.500Z" fill="#fff" stroke="#777" /><path d="M12 5C15 7 14 10 14 11" stroke="#3b7cc0" strokeWidth="2" fill="none" /><rect x=".5" y="12.500" width="14" height="3" fill="#fff" stroke="#aaa" /></svg></Cell>
            <Cell $w={6}><Caret /></Cell>
            <Cell $w={24}><svg width="14" height="14"><path d="M.5.5H13.500V13.500H.5ZM7 0V14M0 7H14" fill="none" stroke="#888" strokeDasharray="2 1.500" /></svg></Cell><Cell $w={8}><Caret /></Cell>
          </RRow>
          <GroupLabel><Gap $w={62} /><Fit w={49}>Paragraph</Fit><Gap $w={74} /><Launcher /></GroupLabel>
        </Group>
        <Group $w={386}>
          <Gallery>
            <StyleItem $w={71}><Sample $s={13} $c="#222"><Fit w={60}>AaBbCcDd</Fit></Sample><Fit w={48}>¶ Normal</Fit></StyleItem>
            <StyleItem $w={73}><Sample $s={13} $c="#222"><Fit w={60}>AaBbCcDd</Fit></Sample><Fit w={62}>¶ No Spac...</Fit></StyleItem>
            <StyleItem $w={72}><Sample $s={18} $c="#4a8fcf" $light><Fit w={60}>AaBbCc</Fit></Sample><Fit w={54}>Heading 1</Fit></StyleItem>
            <StyleItem $w={72}><Sample $s={15.500} $c="#4a8fcf" $light><Fit w={60}>AaBbCcE</Fit></Sample><Fit w={55}>Heading 2</Fit></StyleItem>
            <StyleItem $w={72}><Sample $s={29} $c="#222" $light><Fit w={60}>AaBl</Fit></Sample><Fit w={23}>Title</Fit></StyleItem>
            <GalleryKeys><div><Caret up c="#bbb" /></div><div><Caret /></div><div><Caret /></div></GalleryKeys>
          </Gallery>
          <GroupLabel><Gap $w={180} /><Fit w={26}>Styles</Fit><Gap $w={173} /><Launcher /></GroupLabel>
        </Group>
        <Group $w={76}>
          <RRow $h={22}><Cell $w={24}><svg width="14" height="13"><path d="M1 13V6L3 1H6V5H8V1H11L13 6V13H8V8H6V13Z" fill="#666" /></svg></Cell><Fit w={22}>Find</Fit><Gap $w={8} /><Caret /></RRow>
          <RRow $h={22}><Cell $w={24}><svg width="15" height="16"><text x="1" y="7" fontFamily={UI} fontSize="8.500" fill="#888">ab</text><text x="4" y="15" fontFamily={UI} fontSize="8.500" fontWeight="bold" fill="#555">ac</text></svg></Cell><Fit w={42}>Replace</Fit></RRow>
          <RRow $h={22}><Cell $w={24}><svg width="10" height="14"><path d="M1 1V12L4 9.500L6 13.500L7.500 12.500L5.500 9H9Z" fill="#fff" stroke="#777" /></svg></Cell><Fit w={32}>Select</Fit><Gap $w={4} /><Caret /></RRow>
          <GroupLabel><Fit w={32}>Editing</Fit></GroupLabel>
        </Group>
        <Cell $w={38}><Gap $w={10} /><Gap $h={150} /><Chevron s={9} dir="up" /></Cell>
      </Ribbon>
      <DocArea>
        <Paper>
          {docLines.map(([n, t, e], i) => (
            <DocLine key={i}>
              <Cell $w={31} $j="flex-start">{n}</Cell><Fit w={(e - 183) / 1.452}>{t}</Fit>
            </DocLine>
          ))}
          <Mark $mt={13} $w={70}><Fit w={69}># Output</Fit></Mark>
          <Mark $mt={15} $w={168}><Fit w={167}># References/Citation</Fit></Mark>
        </Paper>
      </DocArea>
      <DocGutter />
      <WordStatus>
        <Gap $w={6} /><Fit w={59}>PAGE 6 OF 6</Fit><Gap $w={14} /><Fit w={63}>2032 WORDS</Fit><Gap $w={14} />
        <svg width="15" height="12"><path d="M7 1.500C5 .5 3 .5 1 1V10.500C3 10 5 10 7 11ZM7 1.500C9 .5 11 .5 13 1V10.500H7M10 4L13 8M13 4L10 8" fill="none" stroke="#cfdaea" /></svg>
        <Gap $w={14} /><Fit w={122}>ENGLISH (UNITED STATES)</Fit>
        <Spacer />
        <svg width="12" height="12"><path d="M.5 1H5.500V11H.5ZM6.500 1H11.500V11H6.500ZM1.500 4H4.500M1.500 7H4.500M7.500 4H10.500M7.500 7H10.500" fill="none" stroke="#c5d2e6" /></svg><Gap $w={11} />
        <StatusLit><svg width="12" height="12"><path d="M.5.5H11.500V11.500H.5ZM2.500 3H9.500M2.500 5H9.500M2.500 7H9.500M2.500 9H9.500" fill="none" stroke="#dfe7f3" /></svg></StatusLit><Gap $w={10} />
        <svg width="12" height="12"><path d="M.5.5H9.500V6M.5.5V10.500H5M2.500 3H8M2.500 5.500H6" fill="none" stroke="#c5d2e6" /><circle cx="9" cy="9" r="2.500" fill="none" stroke="#c5d2e6" /></svg><Gap $w={14} />
        <svg width="124" height="14" viewBox="0 0 124 14"><path d="M0 7H8" stroke="#fff" strokeWidth="2" /><path d="M11 7H111" stroke="#dfe7f3" /><rect x="63" y="1" width="4" height="12" fill="#fff" /><path d="M115 7H124M119.500 2.500V11.500" stroke="#fff" strokeWidth="2" /></svg>
        <Gap $w={13} /><Fit w={25}>130%</Fit><Gap $w={17} />
      </WordStatus>
    </Win>
  );
}

/* ---------- page ---------- */

export default function App() {
  return (
    <>
      <Global />
      <Screens>
        <Monitor>
          <Workspace>
            <DeskGrid>
              {deskItems.map(([k, col, row, label], i) => (
                <DeskItem key={i} $col={col} $row={row}>
                  <svg width="58" height="58" viewBox="0 0 58 58">{deskArt[k]}</svg>
                  {label.map(([t, w]) => <Fit key={t} w={w}>{t}</Fit>)}
                </DeskItem>
              ))}
            </DeskGrid>
            <MoltsWindow />
            <Win $x={609} $y={26} $w={700} $h={400} $border="#555" $shadow="0 0 11px 4px rgba(0,0,0,.95)">
              <FigureFrame n={14} barOn />
              <FigBody>
                <svg width="698" height="100" viewBox="610 127 698 100"><PlotTitle x={886.5} y={153} tail="D=0.5" w={48.5} /></svg>
              </FigBody>
            </Win>
            <WindowSeam />
            <Win $x={352} $y={158} $w={701} $h={628}>
              <FigureFrame n={15} />
              <FigBody><MoltFigure /></FigBody>
            </Win>
            <Win $x={1056} $y={158} $w={700} $h={628}>
              <FigureFrame n={16} barOn />
              <FigBody><HeatFigure /></FigBody>
            </Win>
          </Workspace>
          <TaskbarMain />
        </Monitor>
        <Monitor>
          <Workspace>
            <Chrome />
            <Explorer />
            <Word />
          </Workspace>
          <TaskbarSecond />
        </Monitor>
      </Screens>
    </>
  );
}
